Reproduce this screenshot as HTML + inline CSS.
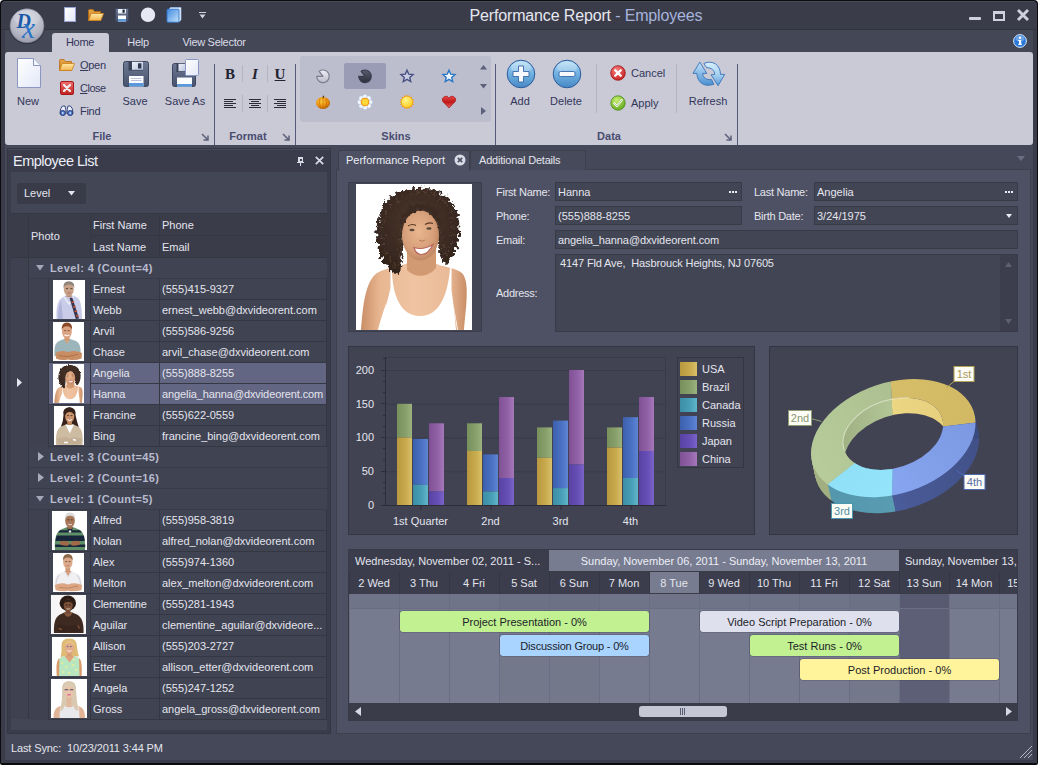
<!DOCTYPE html>
<html><head><meta charset="utf-8"><title>Performance Report - Employees</title>
<style>
html,body{margin:0;padding:0;background:#fff;}
body{width:1038px;height:765px;overflow:hidden;position:relative;font-family:"Liberation Sans",sans-serif;font-size:11px;}
#win{position:absolute;left:0;top:0;width:1038px;height:765px;background:transparent;overflow:hidden;}
#win div,#win span,#win svg{position:absolute;box-sizing:border-box;}
#win span{white-space:nowrap;}
.ph{background:#fff;overflow:hidden;}
</style></head>
<body><div id="win">
<div style="left:0px;top:0px;width:1038px;height:765px;background:#0c0c10;border-radius:4px 4px 2px 2px;"></div>
<div style="left:1px;top:1px;width:1036px;height:762px;background:#3a3c4a;border-radius:4px 4px 0 0;"></div>
<div style="left:4px;top:1px;width:1030px;height:1px;background:#484b5a;"></div>
<span style="left:386px;top:5.5px;width:400px;text-align:center;font-size:16px;line-height:20px;color:#e6e7ef;letter-spacing:-0.15px;">Performance Report<span style="position:static;color:#a7b4dc;"> - Employees</span></span>
<div style="left:969px;top:17px;width:12px;height:3px;background:#cfd1dd;border-radius:1px;"></div>
<div style="left:993px;top:11px;width:12px;height:10px;border:2px solid #cfd1dd;border-top-width:3px;"></div>
<svg style="left:1016px;top:8px;" width="14" height="14" viewBox="0 0 14 14"><path d="M2 2 L12 12 M12 2 L2 12" stroke="#cfd1dd" stroke-width="2.9" fill="none"/></svg>
<div style="left:5px;top:30px;width:1028px;height:23px;background:#444756;"></div>
<div style="left:1px;top:29px;width:1036px;height:1px;background:#32343f;"></div>
<div style="left:52px;top:33px;width:57px;height:20px;background:#c9cad6;border-radius:3px 3px 0 0;"></div>
<span style="left:-20.0px;top:35.0px;width:200px;text-align:center;font-size:11px;line-height:14px;color:#33365a;letter-spacing:-0.3px;">Home</span>
<span style="left:38.0px;top:35.0px;width:200px;text-align:center;font-size:11px;line-height:14px;color:#dcdde8;letter-spacing:-0.3px;">Help</span>
<span style="left:114.0px;top:35.0px;width:200px;text-align:center;font-size:11px;line-height:14px;color:#dcdde8;letter-spacing:-0.3px;">View Selector</span>
<div style="left:5px;top:52px;width:1028px;height:93px;background:#c9cad6;border-radius:3px 3px 3px 3px;"></div>
<div style="left:214px;top:64px;width:1px;height:81px;background:#565979;"></div>
<div style="left:295px;top:64px;width:1px;height:81px;background:#565979;"></div>
<div style="left:495px;top:64px;width:1px;height:81px;background:#565979;"></div>
<div style="left:737px;top:64px;width:1px;height:81px;background:#565979;"></div>
<span style="left:2.0px;top:129.0px;width:200px;text-align:center;font-size:11px;line-height:14px;color:#4a4d70;font-weight:bold;">File</span>
<span style="left:148.0px;top:129.0px;width:200px;text-align:center;font-size:11px;line-height:14px;color:#4a4d70;font-weight:bold;">Format</span>
<span style="left:296.0px;top:129.0px;width:200px;text-align:center;font-size:11px;line-height:14px;color:#4a4d70;font-weight:bold;">Skins</span>
<span style="left:509.0px;top:129.0px;width:200px;text-align:center;font-size:11px;line-height:14px;color:#4a4d70;font-weight:bold;">Data</span>
<span style="left:-72.0px;top:94.0px;width:200px;text-align:center;font-size:11px;line-height:14px;color:#33365a;">New</span>
<span style="left:80px;top:58.0px;font-size:11px;line-height:14px;color:#33365a;letter-spacing:-0.3px;"><u>O</u>pen</span>
<span style="left:80px;top:81.0px;font-size:11px;line-height:14px;color:#33365a;letter-spacing:-0.5px;"><u>C</u>lose</span>
<span style="left:80px;top:104.0px;font-size:11px;line-height:14px;color:#33365a;letter-spacing:-0.3px;">Find</span>
<span style="left:35.0px;top:94.0px;width:200px;text-align:center;font-size:11px;line-height:14px;color:#33365a;">Save</span>
<span style="left:85.0px;top:94.0px;width:200px;text-align:center;font-size:11px;line-height:14px;color:#33365a;">Save As</span>
<span style="left:220.0px;top:67.0px;width:20px;text-align:center;font-size:15px;line-height:14px;color:#22232e;font-family:'Liberation Serif',serif;font-weight:bold;">B</span>
<span style="left:245.0px;top:67.0px;width:20px;text-align:center;font-size:15px;line-height:14px;color:#22232e;font-family:'Liberation Serif',serif;font-weight:bold;font-style:italic;">I</span>
<span style="left:270.0px;top:67.0px;width:20px;text-align:center;font-size:15px;line-height:14px;color:#22232e;font-family:'Liberation Serif',serif;font-weight:bold;"><u>U</u></span>
<div style="left:300px;top:56px;width:191px;height:66px;background:#bcbdcd;border-radius:3px;"></div>
<div style="left:344px;top:63px;width:42px;height:26px;background:#9a9cb6;border-radius:2px;"></div>
<span style="left:420.0px;top:94.0px;width:200px;text-align:center;font-size:11px;line-height:14px;color:#33365a;">Add</span>
<span style="left:466.0px;top:94.0px;width:200px;text-align:center;font-size:11px;line-height:14px;color:#33365a;">Delete</span>
<span style="left:631px;top:66.0px;font-size:11px;line-height:14px;color:#33365a;">Cancel</span>
<span style="left:631px;top:96.0px;font-size:11px;line-height:14px;color:#33365a;">Apply</span>
<span style="left:608.0px;top:94.0px;width:200px;text-align:center;font-size:11px;line-height:14px;color:#33365a;">Refresh</span>
<div style="left:596px;top:64px;width:1px;height:49px;background:#b2b4c6;"></div>
<div style="left:676px;top:64px;width:1px;height:49px;background:#b2b4c6;"></div>
<svg width="0" height="0" style="left:0;top:0;"><defs>
<linearGradient id="igPage" x1="0" y1="0" x2="1" y2="1"><stop offset="0" stop-color="#ffffff"/><stop offset="1" stop-color="#e3e8f8"/></linearGradient>
<linearGradient id="igFolderB" x1="0" y1="0" x2="0" y2="1"><stop offset="0" stop-color="#e8a848"/><stop offset="1" stop-color="#c87818"/></linearGradient>
<linearGradient id="igFolderF" x1="0" y1="0" x2="0" y2="1"><stop offset="0" stop-color="#ffe9a8"/><stop offset="1" stop-color="#f2b450"/></linearGradient>
<linearGradient id="igRed" x1="0" y1="0" x2="0" y2="1"><stop offset="0" stop-color="#f07070"/><stop offset="1" stop-color="#c02020"/></linearGradient>
<linearGradient id="igFloppy" x1="0" y1="0" x2="0" y2="1"><stop offset="0" stop-color="#6d7893"/><stop offset="1" stop-color="#48526c"/></linearGradient>
<linearGradient id="igShut" x1="0" y1="0" x2="1" y2="1"><stop offset="0" stop-color="#eef2fa"/><stop offset="1" stop-color="#b8c4dc"/></linearGradient>
<linearGradient id="igBlueBall" x1="0" y1="0" x2="0" y2="1"><stop offset="0" stop-color="#b4def6"/><stop offset="0.5" stop-color="#6fb0e0"/><stop offset="1" stop-color="#4788c4"/></linearGradient>
<radialGradient id="igRedBall" cx="0.4" cy="0.3" r="0.8"><stop offset="0" stop-color="#f88080"/><stop offset="1" stop-color="#c01818"/></radialGradient>
<radialGradient id="igGreenBall" cx="0.4" cy="0.3" r="0.8"><stop offset="0" stop-color="#c8f070"/><stop offset="1" stop-color="#58a018"/></radialGradient>
<linearGradient id="igArrow" x1="0" y1="0" x2="0" y2="1"><stop offset="0" stop-color="#c4e4fa"/><stop offset="1" stop-color="#4a90d0"/></linearGradient>
<radialGradient id="igApp" cx="0.5" cy="0.3" r="0.8"><stop offset="0" stop-color="#d4d6e0"/><stop offset="0.6" stop-color="#b6b8c6"/><stop offset="1" stop-color="#8e90a2"/></radialGradient>
<linearGradient id="igPacL" x1="0" y1="0" x2="0" y2="1"><stop offset="0" stop-color="#f0f0f6"/><stop offset="1" stop-color="#b8bac8"/></linearGradient>
<linearGradient id="igPacD" x1="0" y1="0" x2="0" y2="1"><stop offset="0" stop-color="#5a5d70"/><stop offset="1" stop-color="#2c2e3a"/></linearGradient>
<radialGradient id="igPump" cx="0.4" cy="0.35" r="0.7"><stop offset="0" stop-color="#ffd040"/><stop offset="0.6" stop-color="#f09010"/><stop offset="1" stop-color="#a85800"/></radialGradient>
<radialGradient id="igSun" cx="0.4" cy="0.35" r="0.7"><stop offset="0" stop-color="#fff890"/><stop offset="1" stop-color="#ffc818"/></radialGradient>
<linearGradient id="igHeart" x1="0" y1="0" x2="0" y2="1"><stop offset="0" stop-color="#e84848"/><stop offset="0.5" stop-color="#c01818"/><stop offset="1" stop-color="#e06060"/></linearGradient>
<linearGradient id="igArrow2" x1="0" y1="0" x2="0" y2="1"><stop offset="0" stop-color="#d8f0fc"/><stop offset="0.55" stop-color="#a4d0f0"/><stop offset="1" stop-color="#5a9ad8"/></linearGradient>
<linearGradient id="igCube" x1="0" y1="0" x2="1" y2="1"><stop offset="0" stop-color="#3f8ae0"/><stop offset="1" stop-color="#c4e2fa"/></linearGradient>
</defs></svg>
<svg style="left:17px;top:58px;" width="24" height="30" viewBox="0 0 24 30"><path d="M0.5 0.5H16.5L23.5 7.5V29.5H0.5Z" fill="url(#igPage)" stroke="#8b97c2"/><path d="M16.5 0.5V7.5H23.5" fill="#f4f6fd" stroke="#8b97c2"/></svg>
<svg style="left:59px;top:59px;" width="16" height="12" viewBox="0 0 16 12"><path d="M0.5 11.5V1.5Q0.5 0.5 1.5 0.5H5L6.5 2.5H12.5V11.5Z" fill="url(#igFolderB)" stroke="#b86c10" stroke-width="0.8"/><path d="M0.6 11.5L3.2 4.5H15.6L12.8 11.5Z" fill="url(#igFolderF)" stroke="#c8801c" stroke-width="0.8"/></svg>
<svg style="left:60px;top:81px;" width="14" height="14" viewBox="0 0 14 14"><rect x="0.5" y="0.5" width="13" height="13" rx="1.5" fill="url(#igRed)" stroke="#a81818"/><path d="M4 4L10 10M10 4L4 10" stroke="#f4ecec" stroke-width="2.3" stroke-linecap="round"/></svg>
<svg style="left:59px;top:105px;" width="15" height="11" viewBox="0 0 15 11"><path d="M1 8.5Q1 3 3.5 1H6Q7 4 7 8.5Z M14 8.5Q14 3 11.5 1H9Q8 4 8 8.5Z" fill="#e8eefa" stroke="#3c4a80" stroke-width="1"/><circle cx="3.8" cy="8" r="2.6" fill="#4a7ad0" stroke="#2c3870" stroke-width="0.9"/><circle cx="11.2" cy="8" r="2.6" fill="#4a7ad0" stroke="#2c3870" stroke-width="0.9"/><circle cx="3.8" cy="8" r="0.9" fill="#cfe0ff"/><circle cx="11.2" cy="8" r="0.9" fill="#cfe0ff"/></svg>
<svg style="left:123px;top:61px;" width="26" height="26" viewBox="0 0 26 26"><rect x="0.5" y="0.5" width="25" height="25" rx="2" fill="url(#igFloppy)" stroke="#3e4760"/><rect x="5.5" y="0.5" width="14.5" height="9" fill="#3a4258"/><rect x="9" y="0.8" width="11" height="8" fill="url(#igShut)"/><rect x="15" y="2.3" width="3.4" height="5.2" fill="#2e3650"/><rect x="6" y="15" width="14.5" height="10.5" fill="#fbfcff"/><rect x="6" y="22" width="14.5" height="3.5" fill="#5a9adc"/><path d="M8 17.5H18.5M8 19.5H18.5" stroke="#a8b4d0" stroke-width="0.8"/></svg>
<svg style="left:172px;top:63px;" width="24" height="24" viewBox="0 0 24 24"><rect x="0.5" y="0.5" width="23" height="23" rx="2" fill="url(#igFloppy)" stroke="#3e4760"/><rect x="4.5" y="0.5" width="9" height="8.5" fill="#3a4258"/><rect x="6.5" y="0.8" width="7" height="7.4" fill="url(#igShut)"/><rect x="5" y="14.5" width="15" height="9" fill="#fbfcff"/><rect x="5" y="21" width="15" height="2.6" fill="#5a9adc"/></svg>
<svg style="left:185px;top:59px;" width="14" height="17" viewBox="0 0 14 17"><rect x="0.5" y="0.5" width="13" height="16" rx="1" fill="url(#igPage)" stroke="#8b97c2"/></svg>
<div style="left:242px;top:65px;width:1px;height:17px;background:#b2b4c6;"></div>
<div style="left:242px;top:95px;width:1px;height:17px;background:#b2b4c6;"></div>
<div style="left:267px;top:65px;width:1px;height:17px;background:#b2b4c6;"></div>
<div style="left:267px;top:95px;width:1px;height:17px;background:#b2b4c6;"></div>
<div style="left:224px;top:99px;width:12px;height:1px;background:#2a2b36;"></div>
<div style="left:224px;top:101px;width:9px;height:1px;background:#2a2b36;"></div>
<div style="left:224px;top:103px;width:12px;height:1px;background:#2a2b36;"></div>
<div style="left:224px;top:105px;width:9px;height:1px;background:#2a2b36;"></div>
<div style="left:224px;top:107px;width:12px;height:1px;background:#2a2b36;"></div>
<div style="left:249px;top:99px;width:12px;height:1px;background:#2a2b36;"></div>
<div style="left:251px;top:101px;width:8px;height:1px;background:#2a2b36;"></div>
<div style="left:249px;top:103px;width:12px;height:1px;background:#2a2b36;"></div>
<div style="left:251px;top:105px;width:8px;height:1px;background:#2a2b36;"></div>
<div style="left:249px;top:107px;width:12px;height:1px;background:#2a2b36;"></div>
<div style="left:274px;top:99px;width:12px;height:1px;background:#2a2b36;"></div>
<div style="left:277px;top:101px;width:9px;height:1px;background:#2a2b36;"></div>
<div style="left:274px;top:103px;width:12px;height:1px;background:#2a2b36;"></div>
<div style="left:277px;top:105px;width:9px;height:1px;background:#2a2b36;"></div>
<div style="left:274px;top:107px;width:12px;height:1px;background:#2a2b36;"></div>
<svg style="left:315px;top:68px;" width="16" height="16" viewBox="0 0 16 16"><path d="M8 8.3L1.7 8.3A6.3 6.3 0 1 0 4.2 3.3Z" fill="url(#igPacL)" stroke="#7c7e90" stroke-width="1.2" stroke-linejoin="round"/></svg>
<svg style="left:357px;top:68px;" width="16" height="16" viewBox="0 0 16 16"><path d="M8 8.3L1.7 8.3A6.3 6.3 0 1 0 4.2 3.3Z" fill="url(#igPacD)" stroke="#3a3c4c" stroke-width="1.2" stroke-linejoin="round"/></svg>
<svg style="left:399px;top:68px;" width="16" height="16" viewBox="0 0 16 16"><polygon points="8.00,2.20 9.70,6.15 13.99,6.55 10.76,9.40 11.70,13.60 8.00,11.40 4.30,13.60 5.24,9.40 2.01,6.55 6.30,6.15" fill="#c9cde2" stroke="#4a5284" stroke-width="1.4" stroke-linejoin="miter"/></svg>
<svg style="left:441px;top:68px;" width="16" height="16" viewBox="0 0 16 16"><polygon points="8.00,2.20 9.70,6.15 13.99,6.55 10.76,9.40 11.70,13.60 8.00,11.40 4.30,13.60 5.24,9.40 2.01,6.55 6.30,6.15" fill="#f2f6fc" stroke="#2a78c6" stroke-width="1.4" stroke-linejoin="miter"/></svg>
<svg style="left:315px;top:94px;" width="16" height="16" viewBox="0 0 16 16"><ellipse cx="8" cy="9" rx="7" ry="6" fill="url(#igPump)"/><path d="M5 4.5Q4 9 5.5 14.5M8 3.8V15M11 4.5Q12 9 10.5 14.5" stroke="#b86800" stroke-width="0.7" fill="none"/><path d="M7.5 3.8L8 1.5L9.2 2L8.8 4Z" fill="#5a3a10"/></svg>
<svg style="left:357px;top:94px;" width="16" height="16" viewBox="0 0 16 16"><circle cx="13.20" cy="8.00" r="2.5" fill="#f2f8ff" stroke="#a8b8d0" stroke-width="0.5"/><circle cx="11.68" cy="11.68" r="2.5" fill="#f2f8ff" stroke="#a8b8d0" stroke-width="0.5"/><circle cx="8.00" cy="13.20" r="2.5" fill="#f2f8ff" stroke="#a8b8d0" stroke-width="0.5"/><circle cx="4.32" cy="11.68" r="2.5" fill="#f2f8ff" stroke="#a8b8d0" stroke-width="0.5"/><circle cx="2.80" cy="8.00" r="2.5" fill="#f2f8ff" stroke="#a8b8d0" stroke-width="0.5"/><circle cx="4.32" cy="4.32" r="2.5" fill="#f2f8ff" stroke="#a8b8d0" stroke-width="0.5"/><circle cx="8.00" cy="2.80" r="2.5" fill="#f2f8ff" stroke="#a8b8d0" stroke-width="0.5"/><circle cx="11.68" cy="4.32" r="2.5" fill="#f2f8ff" stroke="#a8b8d0" stroke-width="0.5"/><circle cx="8" cy="8" r="3.9" fill="#ffd838" stroke="#f09018" stroke-width="1"/></svg>
<svg style="left:399px;top:94px;" width="16" height="16" viewBox="0 0 16 16"><path d="M15.60 8.00L13.39 6.91L13.39 9.09Z" fill="#f09a18"/><path d="M15.02 10.91L13.40 9.05L12.56 11.07Z" fill="#f09a18"/><path d="M13.37 13.37L12.58 11.04L11.04 12.58Z" fill="#f09a18"/><path d="M10.91 15.02L11.07 12.56L9.05 13.40Z" fill="#f09a18"/><path d="M8.00 15.60L9.09 13.39L6.91 13.39Z" fill="#f09a18"/><path d="M5.09 15.02L6.95 13.40L4.93 12.56Z" fill="#f09a18"/><path d="M2.63 13.37L4.96 12.58L3.42 11.04Z" fill="#f09a18"/><path d="M0.98 10.91L3.44 11.07L2.60 9.05Z" fill="#f09a18"/><path d="M0.40 8.00L2.61 9.09L2.61 6.91Z" fill="#f09a18"/><path d="M0.98 5.09L2.60 6.95L3.44 4.93Z" fill="#f09a18"/><path d="M2.63 2.63L3.42 4.96L4.96 3.42Z" fill="#f09a18"/><path d="M5.09 0.98L4.93 3.44L6.95 2.60Z" fill="#f09a18"/><path d="M8.00 0.40L6.91 2.61L9.09 2.61Z" fill="#f09a18"/><path d="M10.91 0.98L9.05 2.60L11.07 3.44Z" fill="#f09a18"/><path d="M13.37 2.63L11.04 3.42L12.58 4.96Z" fill="#f09a18"/><path d="M15.02 5.09L12.56 4.93L13.40 6.95Z" fill="#f09a18"/><circle cx="8" cy="8" r="5.8" fill="url(#igSun)" stroke="#f0a018" stroke-width="0.6"/></svg>
<svg style="left:441px;top:94px;" width="16" height="16" viewBox="0 0 16 16"><path d="M8 14L1.8 7.5A3.4 3.4 0 0 1 8 4A3.4 3.4 0 0 1 14.2 7.5Z" fill="url(#igHeart)" stroke="#a01010" stroke-width="0.6"/></svg>
<svg style="left:480px;top:65px;" width="7" height="5" viewBox="0 0 7 5"><path d="M0 4.5H7L3.5 0Z" fill="#5d607a"/></svg>
<svg style="left:480px;top:84px;" width="7" height="5" viewBox="0 0 7 5"><path d="M0 0H7L3.5 4.5Z" fill="#5d607a"/></svg>
<svg style="left:481px;top:107px;" width="5" height="8" viewBox="0 0 5 8"><path d="M0 0V8L5 4Z" fill="#5d607a"/></svg>
<svg style="left:506px;top:59px;" width="30" height="30" viewBox="0 0 30 30"><circle cx="15" cy="15" r="13.8" fill="url(#igBlueBall)" stroke="#2c5a9c" stroke-width="1"/><ellipse cx="15" cy="8.5" rx="10" ry="6" fill="rgba(255,255,255,0.25)"/><path d="M12.5 7H17.5V12.5H23V17.5H17.5V23H12.5V17.5H7V12.5H12.5Z" fill="#f6f8fe" stroke="#3568a8" stroke-width="0.9" stroke-linejoin="round"/></svg>
<svg style="left:552px;top:59px;" width="30" height="30" viewBox="0 0 30 30"><circle cx="15" cy="15" r="13.8" fill="url(#igBlueBall)" stroke="#2c5a9c" stroke-width="1"/><ellipse cx="15" cy="8.5" rx="10" ry="6" fill="rgba(255,255,255,0.25)"/><rect x="7" y="12.5" width="16" height="5" rx="1.5" fill="#f6f8fe" stroke="#3568a8" stroke-width="0.9"/></svg>
<svg style="left:610px;top:65px;" width="16" height="16" viewBox="0 0 16 16"><circle cx="8" cy="8" r="7.3" fill="url(#igRedBall)" stroke="#a01414" stroke-width="0.8"/><path d="M5.2 5.2L10.8 10.8M10.8 5.2L5.2 10.8" stroke="#fff" stroke-width="2.3" stroke-linecap="round"/></svg>
<svg style="left:610px;top:95px;" width="16" height="16" viewBox="0 0 16 16"><circle cx="8" cy="8" r="7.2" fill="url(#igGreenBall)" stroke="#4a8a14" stroke-width="0.8"/><path d="M4.3 8.2L7 11L11.8 4.8" stroke="#fff" stroke-width="2" fill="none" stroke-linecap="round" stroke-linejoin="round"/><path d="M4.3 8.2L7 11L11.8 4.8" stroke="#3a7010" stroke-width="0.4" fill="none"/></svg>
<svg style="left:688px;top:56px;" width="42" height="36" viewBox="0 0 42 36"><path d="M11.8 6.1L18.8 17.4L14.6 17.4C14.8 21.5 18.5 24.3 23.5 23.5L25.9 28.2C17 31.5 9.2 27 8.9 17.4L4.9 17.4Z" fill="url(#igArrow)" stroke="#3a72b8" stroke-width="0.9" stroke-linejoin="round"/><path d="M30.1 29.7L23.1 18.8L26.8 18.4C26.5 14.5 23.5 11.5 18.8 11.8L15.8 7.5C24.5 3.5 32.5 9 32.5 18.4L36.7 18.4Z" fill="url(#igArrow2)" stroke="#3a72b8" stroke-width="0.9" stroke-linejoin="round"/></svg>
<svg style="left:201px;top:133px;" width="8" height="8" viewBox="0 0 8 8"><path d="M1 1L6.5 6.5M2.5 7H7V2.5" stroke="#5d607a" stroke-width="1.5" fill="none"/></svg>
<svg style="left:282px;top:133px;" width="8" height="8" viewBox="0 0 8 8"><path d="M1 1L6.5 6.5M2.5 7H7V2.5" stroke="#5d607a" stroke-width="1.5" fill="none"/></svg>
<svg style="left:724px;top:133px;" width="8" height="8" viewBox="0 0 8 8"><path d="M1 1L6.5 6.5M2.5 7H7V2.5" stroke="#5d607a" stroke-width="1.5" fill="none"/></svg>
<svg style="left:64px;top:7px;" width="12" height="15" viewBox="0 0 12 15"><rect x="0.5" y="0.5" width="11" height="14" fill="url(#igPage)" stroke="#98a3d0"/></svg>
<svg style="left:88px;top:9px;" width="16" height="12" viewBox="0 0 16 12"><path d="M0.5 11.5V1.5Q0.5 0.5 1.5 0.5H5L6.5 2.5H12.5V11.5Z" fill="url(#igFolderB)" stroke="#b86c10" stroke-width="0.8"/><path d="M0.6 11.5L3.2 4.5H15.6L12.8 11.5Z" fill="url(#igFolderF)" stroke="#c8801c" stroke-width="0.8"/></svg>
<svg style="left:115px;top:8px;" width="14" height="14" viewBox="0 0 14 14"><rect x="0.5" y="0.5" width="13" height="13" rx="1" fill="url(#igFloppy)" stroke="#3e4760"/><rect x="3" y="1" width="8" height="4.5" fill="#eef2fa"/><rect x="7.5" y="1.6" width="2.2" height="3.2" fill="#1e2436"/><rect x="3" y="7.5" width="8" height="6" fill="#fbfcff"/><rect x="3" y="11" width="8" height="2.5" fill="#5a9adc"/></svg>
<svg style="left:140px;top:7px;" width="16" height="16" viewBox="0 0 16 16"><circle cx="8" cy="7.8" r="7.2" fill="#e6e8f3"/></svg>
<svg style="left:166px;top:7px;" width="16" height="16" viewBox="0 0 16 16"><path d="M2.5 2.5L4.5 0.5H15V13L13 15Z" fill="#eaf2fc" stroke="#9cc0e8" stroke-width="0.7"/><rect x="1" y="2.2" width="12" height="13" rx="0.8" fill="url(#igCube)" stroke="#2f72c8" stroke-width="0.9"/></svg>
<div style="left:199px;top:12px;width:7px;height:1px;background:#cfd1dd;"></div>
<svg style="left:199px;top:14px;" width="7" height="5" viewBox="0 0 7 5"><path d="M0.5 0.5H6.5L3.5 4.5Z" fill="#cfd1dd"/></svg>
<svg style="left:8px;top:7px;" width="38" height="38" viewBox="0 0 38 38"><circle cx="19" cy="19" r="18" fill="#2c2e3a"/><circle cx="19" cy="18.7" r="17" fill="url(#igApp)" stroke="#7c7e90" stroke-width="0.8"/><ellipse cx="19" cy="11" rx="13" ry="8" fill="rgba(255,255,255,0.18)"/><text x="8.5" y="21" font-family="Liberation Serif, serif" font-style="italic" font-weight="bold" font-size="20" fill="#1c58a8">D</text><text x="14" y="30.5" font-family="Liberation Serif, serif" font-style="italic" font-size="29" fill="#2a74c8">x</text></svg>
<svg style="left:1013px;top:34px;" width="14" height="14" viewBox="0 0 14 14"><circle cx="7" cy="7" r="6.4" fill="#2a78d8" stroke="#d8e8fc" stroke-width="1"/><ellipse cx="7" cy="4.5" rx="4.5" ry="2.8" fill="rgba(255,255,255,0.3)"/><rect x="6" y="6" width="2.2" height="4.6" fill="#fff"/><rect x="5.2" y="6" width="1.6" height="1" fill="#fff"/><rect x="5.2" y="9.8" width="3.8" height="1" fill="#fff"/><circle cx="7" cy="3.8" r="1.2" fill="#fff"/></svg>
<div style="left:5px;top:145px;width:1028px;height:616px;background:#454858;"></div>
<div style="left:7px;top:148px;width:324px;height:586px;background:#3a3c4b;border:1px solid #343642;"></div>
<div style="left:8px;top:149px;width:322px;height:1px;background:#474a5a;"></div>
<span style="left:13px;top:152.0px;font-size:14.5px;line-height:18px;color:#eceef6;letter-spacing:-0.5px;">Employee List</span>
<div style="left:298px;top:157px;width:5px;height:5px;background:#d9dbe6;"></div>
<div style="left:300px;top:159px;width:2px;height:2px;background:#3a3c4b;"></div>
<div style="left:297px;top:162px;width:7px;height:1px;background:#d9dbe6;"></div>
<div style="left:300px;top:163px;width:1px;height:3px;background:#d9dbe6;"></div>
<svg style="left:315px;top:156px;" width="9" height="9" viewBox="0 0 9 9"><path d="M0.8 0.8L8.2 8.2M8.2 0.8L0.8 8.2" stroke="#d9dbe6" stroke-width="1.7" fill="none"/></svg>
<div style="left:11px;top:172px;width:316px;height:558px;background:#434655;"></div>
<div style="left:17px;top:183px;width:69px;height:21px;background:#393b49;border-radius:2px;"></div>
<span style="left:24px;top:186.0px;font-size:11px;line-height:14px;color:#e4e5ee;">Level</span>
<svg style="left:68px;top:191px;" width="7" height="5" viewBox="0 0 7 5"><path d="M0 0h7l-3.5 4.5z" fill="#e4e5ee"/></svg>
<div style="left:11px;top:213px;width:316px;height:45px;background:#3a3c4a;border-top:1px solid #353742;border-bottom:1px solid #353742;"></div>
<div style="left:28px;top:213px;width:1px;height:45px;background:#353742;"></div>
<div style="left:90px;top:213px;width:1px;height:45px;background:#353742;"></div>
<div style="left:159px;top:213px;width:1px;height:45px;background:#353742;"></div>
<div style="left:90px;top:235px;width:237px;height:1px;background:#353742;"></div>
<span style="left:31px;top:229.0px;font-size:11px;line-height:14px;color:#e4e5ee;">Photo</span>
<span style="left:93px;top:218.0px;font-size:11px;line-height:14px;color:#e4e5ee;">First Name</span>
<span style="left:93px;top:240.0px;font-size:11px;line-height:14px;color:#e4e5ee;">Last Name</span>
<span style="left:162px;top:218.0px;font-size:11px;line-height:14px;color:#e4e5ee;">Phone</span>
<span style="left:162px;top:240.0px;font-size:11px;line-height:14px;color:#e4e5ee;">Email</span>
<div style="left:11px;top:258px;width:17px;height:461px;background:#3f4150;"></div>
<div style="left:28px;top:258px;width:1px;height:461px;background:#353742;"></div>
<svg style="left:17px;top:378px;" width="5" height="9" viewBox="0 0 5 9"><path d="M0 0l5 4.5l-5 4.5z" fill="#e4e5ee"/></svg>
<div style="left:29px;top:258px;width:298px;height:21px;background:#404352;border-bottom:1px solid #393b48;"></div>
<svg style="left:36px;top:265px;" width="8" height="6" viewBox="0 0 8 6"><path d="M0 0h8l-4 5.5z" fill="#a3a5b8"/></svg>
<span style="left:50px;top:261.0px;font-size:11px;line-height:14px;color:#b9bbce;font-weight:bold;letter-spacing:0.4px;">Level: 4 (Count=4)</span>
<div style="left:29px;top:279px;width:19px;height:42px;background:#3f4150;"></div>
<div style="left:48px;top:279px;width:279px;height:42px;background:#404352;"></div>
<div style="left:48px;top:320px;width:279px;height:1px;background:#353742;"></div>
<div style="left:90px;top:299px;width:237px;height:1px;background:#353742;"></div>
<div style="left:48px;top:279px;width:1px;height:42px;background:#353742;"></div>
<div style="left:90px;top:279px;width:1px;height:42px;background:#353742;"></div>
<div style="left:159px;top:279px;width:1px;height:42px;background:#353742;"></div>
<div style="left:326px;top:279px;width:1px;height:42px;background:#353742;"></div>
<div class="ph" style="left:53px;top:280px;width:32px;height:39px;"><svg width="32" height="39" viewBox="0 0 32 39" style="left:0;top:0;"><rect width="32" height="39" fill="#fff"/><g style="filter:blur(0.45px)"><path d="M3.5 39C3 30 4 22 8 18.5L12.5 15.5L20 15.5L25 18C28 21 29 30 29 39Z" fill="#c9cce8"/><path d="M5 39C5 30 6 25 8 21L10 39Z" fill="#aeb2d6"/><path d="M11 17L16 24L20.5 16.5" fill="none" stroke="#e8eaf8" stroke-width="1.6"/><path d="M16.5 18L19.3 17.5L26 38.5L22.8 39Z" fill="#35354f"/><path d="M18.5 22.5L21 22M20 27L22.6 26.5M21.6 31.5L24.2 31M23 36L25.6 35.5" stroke="#c8543c" stroke-width="1.3"/><rect x="13.5" y="12" width="5" height="5" fill="#b98a70"/><ellipse cx="15.8" cy="9.2" rx="5" ry="6.8" fill="#c9a088"/><path d="M10.4 8.5Q9.8 1.2 15.8 1.2Q22 1.2 21.3 8.5Q20.5 4.8 15.8 4.6Q11.5 4.8 10.4 8.5Z" fill="#8d857b"/><path d="M13 8.6h2M17.4 8.6h2" stroke="#4a3a30" stroke-width="0.9"/><path d="M14.6 13h3" stroke="#8a5a48" stroke-width="0.7"/></g></svg></div>
<span style="left:93px;top:282.0px;font-size:11px;line-height:14px;color:#e4e5ee;">Ernest</span>
<span style="left:93px;top:303.0px;font-size:11px;line-height:14px;color:#e4e5ee;">Webb</span>
<span style="left:162px;top:282.0px;font-size:11px;line-height:14px;color:#e4e5ee;">(555)415-9327</span>
<span style="left:162px;top:303.0px;font-size:11px;line-height:14px;color:#e4e5ee;">ernest_webb@dxvideorent.com</span>
<div style="left:29px;top:321px;width:19px;height:42px;background:#3f4150;"></div>
<div style="left:48px;top:321px;width:279px;height:42px;background:#404352;"></div>
<div style="left:48px;top:362px;width:279px;height:1px;background:#353742;"></div>
<div style="left:90px;top:341px;width:237px;height:1px;background:#353742;"></div>
<div style="left:48px;top:321px;width:1px;height:42px;background:#353742;"></div>
<div style="left:90px;top:321px;width:1px;height:42px;background:#353742;"></div>
<div style="left:159px;top:321px;width:1px;height:42px;background:#353742;"></div>
<div style="left:326px;top:321px;width:1px;height:42px;background:#353742;"></div>
<div class="ph" style="left:53px;top:322px;width:31px;height:39px;"><svg width="31" height="39" viewBox="0 0 31 39" style="left:0;top:0;"><rect width="31" height="39" fill="#fff"/><g style="filter:blur(0.45px)"><path d="M1.5 34C1 26 2 21 6 19L11 17L17 17L23 19C27 21 28 26 27.5 34Z" fill="#9bb5bb"/><path d="M11 17L14 22L17 17Z" fill="#d9a07c"/><path d="M2.5 31Q8 27.5 15 30Q22 27.5 29 31L28.5 36.5Q22 39 15 37.5Q8 39 3 36.5Z" fill="#c98d64"/><path d="M6 33.5Q15 36 25 32" stroke="#a8683f" stroke-width="0.8" fill="none"/><rect x="11.5" y="13" width="5" height="5" fill="#cf9670"/><ellipse cx="13.9" cy="9.5" rx="4.9" ry="7" fill="#dba382"/><path d="M8.8 8Q8.4 0.6 13.9 0.6Q19.6 0.6 19 8Q18 4.2 13.9 4.2Q9.8 4.2 8.8 8Z" fill="#8a4a28"/><path d="M11.5 12.8Q14 14.8 16.4 12.8" stroke="#fff" stroke-width="1.1" fill="none"/><path d="M11.3 8.6h1.8M14.8 8.6h1.8" stroke="#5a3a28" stroke-width="0.8"/></g></svg></div>
<span style="left:93px;top:324.0px;font-size:11px;line-height:14px;color:#e4e5ee;">Arvil</span>
<span style="left:93px;top:345.0px;font-size:11px;line-height:14px;color:#e4e5ee;">Chase</span>
<span style="left:162px;top:324.0px;font-size:11px;line-height:14px;color:#e4e5ee;">(555)586-9256</span>
<span style="left:162px;top:345.0px;font-size:11px;line-height:14px;color:#e4e5ee;">arvil_chase@dxvideorent.com</span>
<div style="left:29px;top:363px;width:19px;height:42px;background:#3f4150;"></div>
<div style="left:48px;top:363px;width:279px;height:42px;background:#636683;"></div>
<div style="left:48px;top:404px;width:279px;height:1px;background:#353742;"></div>
<div style="left:90px;top:383px;width:237px;height:1px;background:#353742;"></div>
<div style="left:48px;top:363px;width:1px;height:42px;background:#353742;"></div>
<div style="left:90px;top:363px;width:1px;height:42px;background:#353742;"></div>
<div style="left:159px;top:363px;width:1px;height:42px;background:#353742;"></div>
<div style="left:326px;top:363px;width:1px;height:42px;background:#353742;"></div>
<div class="ph" style="left:53px;top:364px;width:31px;height:39px;"><svg width="31" height="39" viewBox="0 0 116 146" preserveAspectRatio="none" style="left:0;top:0;"><rect width="116" height="146" fill="#fff"/><g filter="url(#soft)"><path d="M5 146 C7 122 9 98 21 89 C31 83 44 83 52 79 L78 79 C86 83 98 83 106 89 C114 98 110 122 108 146 Z" fill="url(#skinB)"/><path d="M51 62 L51 86 C58 94 72 94 80 84 L80 62 Z" fill="#d29a72"/><path d="M24 146 C28 128 32 116 34.5 104 L34.5 84 L36 84 C36 110 44 132 64 132 C84 132 92 110 94 84 L95.5 84 L95.5 106 C97 118 99 130 100 146 Z" fill="#fff"/><path d="M22 146 C25 134 28 126 30.5 118 L28 146 Z M102 146 C100 134 98.5 126 97 118 L101 146 Z" fill="#fff"/></g><g filter="url(#curl)"><path d="M62 4 C84 2 100 16 103 38 C105 56 99 72 91 80 C85 80 82 62 80 50 L48 50 C47 62 47 80 43 91 C34 89 25 78 22 64 C17 44 23 21 37 11 C45 6 54 4 62 4 Z" fill="url(#hairG)"/></g><g filter="url(#curl2)" opacity="0.55"><path d="M60 8 C80 6 95 20 97 40 C98 52 95 64 90 72 C86 60 84 44 78 36 C70 28 56 28 50 36 C44 46 46 70 42 84 C34 78 28 66 27 54 C25 34 34 14 60 8 Z" fill="none" stroke="#6a5040" stroke-width="2.2" stroke-dasharray="3 5"/></g><g filter="url(#soft)"><ellipse cx="64.5" cy="51.5" rx="18.5" ry="25" fill="url(#skinF)"/></g><g filter="url(#curl)"><path d="M44 46 C43 28 54 20 66 20 C78 20 87 30 85 48 C82 36 76 26 66 25.5 C54 26 48 36 44 46 Z" fill="#3b2a22"/></g><g filter="url(#soft)"><path d="M52 42 q4 -2.6 8 -0.5 M69 40.5 q4 -2.6 8 -1" stroke="#5a3a28" stroke-width="1.1" fill="none"/><ellipse cx="56" cy="46" rx="2.6" ry="1.2" fill="#5a4a3a"/><ellipse cx="73" cy="44.5" rx="2.6" ry="1.2" fill="#5a4a3a"/><path d="M63 56 q3 2.5 6 0" stroke="#b07454" stroke-width="0.9" fill="none"/><path d="M58 63.5 Q67 66.5 77 60.5 Q72 71 64.5 70.5 Q59.5 69.5 58 63.5 Z" fill="#fff" stroke="#b8645c" stroke-width="1.1"/></g></svg></div>
<span style="left:93px;top:366.0px;font-size:11px;line-height:14px;color:#e4e5ee;">Angelia</span>
<span style="left:93px;top:387.0px;font-size:11px;line-height:14px;color:#e4e5ee;">Hanna</span>
<span style="left:162px;top:366.0px;font-size:11px;line-height:14px;color:#e4e5ee;">(555)888-8255</span>
<span style="left:162px;top:387.0px;font-size:11px;line-height:14px;color:#e4e5ee;"><span style="position:static;letter-spacing:-0.1px">angelia_hanna@dxvideorent.com</span></span>
<div style="left:29px;top:405px;width:19px;height:42px;background:#3f4150;"></div>
<div style="left:48px;top:405px;width:279px;height:42px;background:#404352;"></div>
<div style="left:48px;top:446px;width:279px;height:1px;background:#353742;"></div>
<div style="left:90px;top:425px;width:237px;height:1px;background:#353742;"></div>
<div style="left:48px;top:405px;width:1px;height:42px;background:#353742;"></div>
<div style="left:90px;top:405px;width:1px;height:42px;background:#353742;"></div>
<div style="left:159px;top:405px;width:1px;height:42px;background:#353742;"></div>
<div style="left:326px;top:405px;width:1px;height:42px;background:#353742;"></div>
<div class="ph" style="left:54px;top:406px;width:30px;height:39px;"><svg width="30" height="39" viewBox="0 0 30 39" style="left:0;top:0;"><rect width="30" height="39" fill="#fff"/><g style="filter:blur(0.45px)"><path d="M9.5 9Q8 2 15.5 1Q22.5 2 21.5 9Q23 16 25 22L19 20L12 20L6.5 22Q9.5 15 9.5 9Z" fill="#36221a"/><path d="M2 39C1.5 30 2.5 23 7 20.5L12 18.5L19.5 18.5L24 20.5C28.5 23 29 30 28.5 39Z" fill="#cdbba2"/><path d="M11.5 18.5L15.8 27.5L20 18.5Z" fill="#fbfbfd"/><path d="M3 33Q9 30 15.5 32.5Q22 30 28 33L27.5 37.5Q21 39.5 15.5 38Q9 39.5 3.5 37.5Z" fill="#c2ae94"/><path d="M10 36.5h4M19 33.5l3 0.8" stroke="#fbfbfd" stroke-width="1.6"/><rect x="13.3" y="14" width="4.6" height="5" fill="#bd8560"/><ellipse cx="15.7" cy="10" rx="4.6" ry="6.6" fill="#cb946e"/><path d="M11 9.5Q10.5 3 15.7 3Q21 3 20.5 9.5Q19 5.8 15.7 6Q12.5 5.8 11 9.5Z" fill="#36221a"/><path d="M13.6 13.6Q15.7 15.4 17.8 13.6" stroke="#fff" stroke-width="1" fill="none"/><path d="M13 9.6h1.8M16.6 9.6h1.8" stroke="#3a2418" stroke-width="0.8"/></g></svg></div>
<span style="left:93px;top:408.0px;font-size:11px;line-height:14px;color:#e4e5ee;">Francine</span>
<span style="left:93px;top:429.0px;font-size:11px;line-height:14px;color:#e4e5ee;">Bing</span>
<span style="left:162px;top:408.0px;font-size:11px;line-height:14px;color:#e4e5ee;">(555)622-0559</span>
<span style="left:162px;top:429.0px;font-size:11px;line-height:14px;color:#e4e5ee;">francine_bing@dxvideorent.com</span>
<div style="left:29px;top:447px;width:298px;height:21px;background:#404352;border-bottom:1px solid #393b48;"></div>
<svg style="left:38px;top:452px;" width="6" height="9" viewBox="0 0 6 9"><path d="M0 0l6 4.5l-6 4.5z" fill="#a9abbd"/></svg>
<span style="left:50px;top:450.0px;font-size:11px;line-height:14px;color:#b9bbce;font-weight:bold;letter-spacing:0.4px;">Level: 3 (Count=45)</span>
<div style="left:29px;top:468px;width:298px;height:21px;background:#404352;border-bottom:1px solid #393b48;"></div>
<svg style="left:38px;top:473px;" width="6" height="9" viewBox="0 0 6 9"><path d="M0 0l6 4.5l-6 4.5z" fill="#a9abbd"/></svg>
<span style="left:50px;top:471.0px;font-size:11px;line-height:14px;color:#b9bbce;font-weight:bold;letter-spacing:0.4px;">Level: 2 (Count=16)</span>
<div style="left:29px;top:489px;width:298px;height:21px;background:#404352;border-bottom:1px solid #393b48;"></div>
<svg style="left:36px;top:496px;" width="8" height="6" viewBox="0 0 8 6"><path d="M0 0h8l-4 5.5z" fill="#a3a5b8"/></svg>
<span style="left:50px;top:492.0px;font-size:11px;line-height:14px;color:#b9bbce;font-weight:bold;letter-spacing:0.4px;">Level: 1 (Count=5)</span>
<div style="left:29px;top:510px;width:19px;height:42px;background:#3f4150;"></div>
<div style="left:48px;top:510px;width:279px;height:42px;background:#404352;"></div>
<div style="left:48px;top:551px;width:279px;height:1px;background:#353742;"></div>
<div style="left:90px;top:530px;width:237px;height:1px;background:#353742;"></div>
<div style="left:48px;top:510px;width:1px;height:42px;background:#353742;"></div>
<div style="left:90px;top:510px;width:1px;height:42px;background:#353742;"></div>
<div style="left:159px;top:510px;width:1px;height:42px;background:#353742;"></div>
<div style="left:326px;top:510px;width:1px;height:42px;background:#353742;"></div>
<div class="ph" style="left:52px;top:511px;width:35px;height:39px;"><svg width="35" height="39" viewBox="0 0 35 39" style="left:0;top:0;"><rect width="35" height="39" fill="#fff"/><g style="filter:blur(0.45px)"><path d="M3 39C2 29 4 21 9 18.5L14 16.5L22 16.5L27 18.5C32 21 33.5 29 33 39Z" fill="#5f8f66"/><path d="M4.5 24.5L32 24.5L32.8 30L3.5 30Z" fill="#18263c"/><path d="M8 19.2L28 19.2L30 21.5L6 21.5Z" fill="#18263c"/><path d="M3.2 33.5h30v2.6h-30z" fill="#18263c"/><path d="M14.5 16.5L18 22L21.5 16.5Z" fill="#1c2a40"/><circle cx="18" cy="20.5" r="1.2" fill="#e8e8e8"/><path d="M8 30.5Q13 28.5 17.5 31.5L16.5 34.5Q11 35 8 33.5Z M28 30.5Q23 28.5 18.5 31.5L19.5 34.5Q25 35 28 33.5Z" fill="#a06a48"/><rect x="15.5" y="13" width="5" height="5" fill="#99694a"/><ellipse cx="18" cy="9.6" rx="4.9" ry="7" fill="#a9785a"/><path d="M12.9 8.5Q12.4 1.4 18 1.4Q23.8 1.4 23.2 8.5Q22 4.6 18 4.8Q14 4.6 12.9 8.5Z" fill="#dcdcdc"/><path d="M15.4 8.8h1.9M18.8 8.8h1.9" stroke="#3a2418" stroke-width="0.8"/><path d="M16 13.2Q18 14.4 20 13.2" stroke="#e8e0d8" stroke-width="0.9" fill="none"/></g></svg></div>
<span style="left:93px;top:513.0px;font-size:11px;line-height:14px;color:#e4e5ee;">Alfred</span>
<span style="left:93px;top:534.0px;font-size:11px;line-height:14px;color:#e4e5ee;">Nolan</span>
<span style="left:162px;top:513.0px;font-size:11px;line-height:14px;color:#e4e5ee;">(555)958-3819</span>
<span style="left:162px;top:534.0px;font-size:11px;line-height:14px;color:#e4e5ee;">alfred_nolan@dxvideorent.com</span>
<div style="left:29px;top:552px;width:19px;height:42px;background:#3f4150;"></div>
<div style="left:48px;top:552px;width:279px;height:42px;background:#404352;"></div>
<div style="left:48px;top:593px;width:279px;height:1px;background:#353742;"></div>
<div style="left:90px;top:572px;width:237px;height:1px;background:#353742;"></div>
<div style="left:48px;top:552px;width:1px;height:42px;background:#353742;"></div>
<div style="left:90px;top:552px;width:1px;height:42px;background:#353742;"></div>
<div style="left:159px;top:552px;width:1px;height:42px;background:#353742;"></div>
<div style="left:326px;top:552px;width:1px;height:42px;background:#353742;"></div>
<div class="ph" style="left:53px;top:553px;width:31px;height:39px;"><svg width="31" height="39" viewBox="0 0 31 39" style="left:0;top:0;"><rect width="31" height="39" fill="#fff"/><g style="filter:blur(0.45px)"><path d="M1.5 35C1 27 2.5 22 7 20L12 18L18.5 18L23 20C28 22 29.5 27 29 35Z" fill="#f0f0f3"/><path d="M3 34C3 28 4 24 6.5 22M27.5 34C27.5 28 26.5 24 24 22" stroke="#d4d4dc" stroke-width="1.2" fill="none"/><path d="M12 18L15 23.5L18.5 18Z" fill="#d8a080"/><path d="M11.5 18L15 24L18.8 18" stroke="#dcdce4" stroke-width="1" fill="none"/><path d="M2 32Q8.5 29 15 31.5Q22 29 29 32L28.5 37Q22 39.2 15 37.8Q8.5 39.2 2.5 37Z" fill="#dba684"/><path d="M6 34.5Q15 36.5 25 33" stroke="#b87c58" stroke-width="0.8" fill="none"/><rect x="12.4" y="13" width="4.8" height="6" fill="#cf9a78"/><ellipse cx="14.8" cy="9" rx="4.7" ry="6.7" fill="#dcaa8a"/><path d="M10 8Q9.6 1 14.8 1Q20.2 1 19.7 8Q18.6 4.4 14.8 4.5Q11 4.4 10 8Z" fill="#8a6a48"/><path d="M12.3 8.6h1.8M15.6 8.6h1.8" stroke="#5a4030" stroke-width="0.8"/><path d="M13.3 12.8h3" stroke="#a86a58" stroke-width="0.7"/></g></svg></div>
<span style="left:93px;top:555.0px;font-size:11px;line-height:14px;color:#e4e5ee;">Alex</span>
<span style="left:93px;top:576.0px;font-size:11px;line-height:14px;color:#e4e5ee;">Melton</span>
<span style="left:162px;top:555.0px;font-size:11px;line-height:14px;color:#e4e5ee;">(555)974-1360</span>
<span style="left:162px;top:576.0px;font-size:11px;line-height:14px;color:#e4e5ee;">alex_melton@dxvideorent.com</span>
<div style="left:29px;top:594px;width:19px;height:42px;background:#3f4150;"></div>
<div style="left:48px;top:594px;width:279px;height:42px;background:#404352;"></div>
<div style="left:48px;top:635px;width:279px;height:1px;background:#353742;"></div>
<div style="left:90px;top:614px;width:237px;height:1px;background:#353742;"></div>
<div style="left:48px;top:594px;width:1px;height:42px;background:#353742;"></div>
<div style="left:90px;top:594px;width:1px;height:42px;background:#353742;"></div>
<div style="left:159px;top:594px;width:1px;height:42px;background:#353742;"></div>
<div style="left:326px;top:594px;width:1px;height:42px;background:#353742;"></div>
<div class="ph" style="left:51px;top:595px;width:35px;height:39px;"><svg width="35" height="39" viewBox="0 0 35 39" style="left:0;top:0;"><rect width="35" height="39" fill="#f6f6f6"/><g style="filter:blur(0.45px)"><path d="M3 38C2.5 29 4 22 9 19.5L13.5 17.5L21 17.5L26 19.5C31 22 33 29 32.5 38Z" fill="#3f2a22"/><path d="M12.5 17.5Q17 26 22 17.5Z" fill="#85573e"/><path d="M6 31Q12 28.5 17.5 31.5Q23 28.5 30 31.5L29.5 36Q23 38 17.5 36.5Q12 38 6.5 36Z" fill="#37241d"/><path d="M7.5 33.5l3.5 1M27 30.5l1.5 3" stroke="#7a4e36" stroke-width="1.6"/><ellipse cx="16.8" cy="8.2" rx="8.2" ry="7.6" fill="#2a1c15"/><rect x="14.5" y="13.5" width="5" height="5" fill="#744a34"/><ellipse cx="17.2" cy="10.3" rx="4.5" ry="6" fill="#7c5039"/><path d="M12.6 9Q14 4.2 17.2 4.4Q20.6 4.2 21.8 9Q20 6.6 17.2 6.8Q14.4 6.6 12.6 9Z" fill="#2a1c15"/><path d="M14.8 10h1.9M18 10h1.9" stroke="#20140e" stroke-width="0.8"/><path d="M15.6 13.6Q17.2 14.8 18.9 13.6" stroke="#e8d8d0" stroke-width="0.8" fill="none"/></g></svg></div>
<span style="left:93px;top:597.0px;font-size:11px;line-height:14px;color:#e4e5ee;"><span style="position:static;letter-spacing:-0.2px">Clementine</span></span>
<span style="left:93px;top:618.0px;font-size:11px;line-height:14px;color:#e4e5ee;">Aguilar</span>
<span style="left:162px;top:597.0px;font-size:11px;line-height:14px;color:#e4e5ee;">(555)281-1943</span>
<span style="left:162px;top:618.0px;font-size:11px;line-height:14px;color:#e4e5ee;">clementine_aguilar@dxvideore...</span>
<div style="left:29px;top:636px;width:19px;height:42px;background:#3f4150;"></div>
<div style="left:48px;top:636px;width:279px;height:42px;background:#404352;"></div>
<div style="left:48px;top:677px;width:279px;height:1px;background:#353742;"></div>
<div style="left:90px;top:656px;width:237px;height:1px;background:#353742;"></div>
<div style="left:48px;top:636px;width:1px;height:42px;background:#353742;"></div>
<div style="left:90px;top:636px;width:1px;height:42px;background:#353742;"></div>
<div style="left:159px;top:636px;width:1px;height:42px;background:#353742;"></div>
<div style="left:326px;top:636px;width:1px;height:42px;background:#353742;"></div>
<div class="ph" style="left:52px;top:637px;width:35px;height:39px;"><svg width="35" height="39" viewBox="0 0 35 39" style="left:0;top:0;"><rect width="35" height="39" fill="#fff"/><g style="filter:blur(0.45px)"><path d="M9.5 10Q8.5 1.6 17.3 1.4Q25.5 1.6 25 10Q25.5 15.5 27 19.5L20 19L14 19L8.5 20Q10 15 9.5 10Z" fill="#dfba74"/><path d="M4.8 39C4 30 4.5 23 7.5 21L9.5 39Z M29.6 39C30.2 30 29.8 23 27 21L25 39Z" fill="#d99a6a"/><path d="M7 39L7.5 21.5Q9 19.5 12.5 19L17.5 25L22.5 19Q25.5 19.5 27 21.5L27.5 39Z" fill="#b7e6c0"/><path d="M9 26h2.5M13 30h2.5M20 28h2.5M23 33h2.5M10 35h2.5M16 36h2.5M20.5 22.5h2.5" stroke="#e8ee9a" stroke-width="1.6"/><path d="M12.5 19L17.5 25.5L22.5 19Z" fill="#dca27a"/><rect x="15" y="14.5" width="4.6" height="5" fill="#d69c74"/><ellipse cx="17.4" cy="10.2" rx="4.6" ry="6.6" fill="#e2ac8c"/><path d="M12.6 10Q12 3.4 17.4 3.4Q23 3.4 22.2 10Q21 6 17.4 6.2Q13.8 6 12.6 10Z" fill="#e3c282"/><path d="M14.8 9.6h1.8M18.1 9.6h1.8" stroke="#4a5a88" stroke-width="0.8"/><path d="M15.4 13.6Q17.4 15.2 19.4 13.6" stroke="#fff" stroke-width="0.9" fill="none"/></g></svg></div>
<span style="left:93px;top:639.0px;font-size:11px;line-height:14px;color:#e4e5ee;">Allison</span>
<span style="left:93px;top:660.0px;font-size:11px;line-height:14px;color:#e4e5ee;">Etter</span>
<span style="left:162px;top:639.0px;font-size:11px;line-height:14px;color:#e4e5ee;">(555)203-2727</span>
<span style="left:162px;top:660.0px;font-size:11px;line-height:14px;color:#e4e5ee;">allison_etter@dxvideorent.com</span>
<div style="left:29px;top:678px;width:19px;height:42px;background:#3f4150;"></div>
<div style="left:48px;top:678px;width:279px;height:42px;background:#404352;"></div>
<div style="left:48px;top:719px;width:279px;height:1px;background:#353742;"></div>
<div style="left:90px;top:698px;width:237px;height:1px;background:#353742;"></div>
<div style="left:48px;top:678px;width:1px;height:42px;background:#353742;"></div>
<div style="left:90px;top:678px;width:1px;height:42px;background:#353742;"></div>
<div style="left:159px;top:678px;width:1px;height:42px;background:#353742;"></div>
<div style="left:326px;top:678px;width:1px;height:42px;background:#353742;"></div>
<div class="ph" style="left:51px;top:679px;width:36px;height:39px;"><svg width="36" height="39" viewBox="0 0 36 39" style="left:0;top:0;"><rect width="36" height="39" fill="#fff"/><g style="filter:blur(0.45px)"><path d="M2.5 39C2.5 33 4 29 8 27.5L14 26L22 26L28.5 27.5C32.5 29 34 33 34 39Z" fill="#e2b496"/><path d="M8.5 39L9 28L14 27Q18 29.5 22.5 27L28 28L28.5 39Z" fill="#e9e9ec"/><path d="M11.2 12Q10 2.2 18 2Q26 2.2 25 12Q25.5 22 27.5 31Q24.5 33 22.5 27L13.5 27Q11.5 33 9 31.5Q11.5 22 11.2 12Z" fill="#d9c9b0"/><rect x="15.6" y="17" width="4.8" height="9.5" fill="#e0b69c"/><ellipse cx="18" cy="12" rx="4.7" ry="7" fill="#e9c4ac"/><path d="M13.2 11Q12.8 4.4 18 4.4Q23.4 4.4 22.8 11Q21 6.8 18 7Q14.6 6.8 13.2 11Z" fill="#dccdb6"/><path d="M13.6 10.8h3.6M18.8 10.8h3.6" stroke="#50485a" stroke-width="1.1"/><path d="M16.4 15.8h3.2" stroke="#d0508a" stroke-width="1.1"/></g></svg></div>
<span style="left:93px;top:681.0px;font-size:11px;line-height:14px;color:#e4e5ee;">Angela</span>
<span style="left:93px;top:702.0px;font-size:11px;line-height:14px;color:#e4e5ee;">Gross</span>
<span style="left:162px;top:681.0px;font-size:11px;line-height:14px;color:#e4e5ee;">(555)247-1252</span>
<span style="left:162px;top:702.0px;font-size:11px;line-height:14px;color:#e4e5ee;">angela_gross@dxvideorent.com</span>
<div style="left:1px;top:760px;width:1036px;height:2px;background:#3a3c4b;"></div>
<span style="left:11px;top:741.0px;font-size:11px;line-height:14px;color:#e4e5ee;letter-spacing:-0.13px;">Last Sync:&nbsp; 10/23/2011 3:44 PM</span>
<div style="left:336px;top:169px;width:695px;height:565px;background:#4e5163;border:1px solid #3e404e;"></div>
<div style="left:470px;top:150px;width:116px;height:20px;background:#474a5a;border:1px solid #3e404e;border-bottom:none;border-radius:3px 3px 0 0;"></div>
<div style="left:338px;top:150px;width:132px;height:21px;background:#4e5163;border:1px solid #3e404e;border-bottom:none;border-radius:3px 3px 0 0;"></div>
<span style="left:346px;top:153.0px;font-size:11px;line-height:14px;color:#eceef6;">Performance Report</span>
<span style="left:479px;top:153.0px;font-size:11px;line-height:14px;color:#e4e5ee;letter-spacing:-0.2px;">Additional Details</span>
<svg style="left:454px;top:154px;" width="12" height="12" viewBox="0 0 12 12"><circle cx="6" cy="6" r="5.5" fill="#d9dbe6"/><path d="M3.8 3.8L8.2 8.2M8.2 3.8L3.8 8.2" stroke="#4e5163" stroke-width="1.7"/></svg>
<svg style="left:1017px;top:156px;" width="8" height="5" viewBox="0 0 8 5"><path d="M0 0h8l-4 5z" fill="#6a6d80"/></svg>
<div style="left:348px;top:182px;width:134px;height:150px;background:#434655;border:1px solid #3a3c4a;"></div>
<div id="bigphoto" class="ph" style="left:356px;top:184px;width:116px;height:146px;"><svg width="116" height="146" viewBox="0 0 116 146" style="left:0;top:0;"><defs><filter id="curl" x="-15%" y="-15%" width="130%" height="130%"><feTurbulence type="fractalNoise" baseFrequency="0.3" numOctaves="2" seed="3" result="n"/><feDisplacementMap in="SourceGraphic" in2="n" scale="10" xChannelSelector="R" yChannelSelector="G"/></filter><filter id="curl2" x="-15%" y="-15%" width="130%" height="130%"><feTurbulence type="fractalNoise" baseFrequency="0.45" numOctaves="2" seed="11" result="n"/><feDisplacementMap in="SourceGraphic" in2="n" scale="12" xChannelSelector="G" yChannelSelector="R"/></filter><filter id="soft"><feGaussianBlur stdDeviation="0.7"/></filter><filter id="soft2"><feGaussianBlur stdDeviation="1.6"/></filter><radialGradient id="skinF" cx="0.45" cy="0.42" r="0.7"><stop offset="0" stop-color="#e8b690"/><stop offset="0.6" stop-color="#d59e78"/><stop offset="1" stop-color="#b27a56"/></radialGradient><linearGradient id="skinB" x1="0" y1="0" x2="1" y2="0"><stop offset="0" stop-color="#c98e66"/><stop offset="0.18" stop-color="#e8b792"/><stop offset="0.5" stop-color="#f0c4a2"/><stop offset="0.82" stop-color="#ebbb98"/><stop offset="1" stop-color="#c98e66"/></linearGradient><radialGradient id="hairG" cx="0.5" cy="0.4" r="0.6"><stop offset="0" stop-color="#4c382d"/><stop offset="1" stop-color="#33241d"/></radialGradient></defs><rect width="116" height="146" fill="#fff"/><g filter="url(#soft)"><path d="M5 146 C7 122 9 98 21 89 C31 83 44 83 52 79 L78 79 C86 83 98 83 106 89 C114 98 110 122 108 146 Z" fill="url(#skinB)"/><path d="M51 62 L51 86 C58 94 72 94 80 84 L80 62 Z" fill="#d29a72"/><path d="M24 146 C28 128 32 116 34.5 104 L34.5 84 L36 84 C36 110 44 132 64 132 C84 132 92 110 94 84 L95.5 84 L95.5 106 C97 118 99 130 100 146 Z" fill="#fff"/><path d="M22 146 C25 134 28 126 30.5 118 L28 146 Z M102 146 C100 134 98.5 126 97 118 L101 146 Z" fill="#fff"/></g><g filter="url(#curl)"><path d="M62 4 C84 2 100 16 103 38 C105 56 99 72 91 80 C85 80 82 62 80 50 L48 50 C47 62 47 80 43 91 C34 89 25 78 22 64 C17 44 23 21 37 11 C45 6 54 4 62 4 Z" fill="url(#hairG)"/></g><g filter="url(#curl2)" opacity="0.55"><path d="M60 8 C80 6 95 20 97 40 C98 52 95 64 90 72 C86 60 84 44 78 36 C70 28 56 28 50 36 C44 46 46 70 42 84 C34 78 28 66 27 54 C25 34 34 14 60 8 Z" fill="none" stroke="#6a5040" stroke-width="2.2" stroke-dasharray="3 5"/></g><g filter="url(#soft)"><ellipse cx="64.5" cy="51.5" rx="18.5" ry="25" fill="url(#skinF)"/></g><g filter="url(#curl)"><path d="M44 46 C43 28 54 20 66 20 C78 20 87 30 85 48 C82 36 76 26 66 25.5 C54 26 48 36 44 46 Z" fill="#3b2a22"/></g><g filter="url(#soft)"><path d="M52 42 q4 -2.6 8 -0.5 M69 40.5 q4 -2.6 8 -1" stroke="#5a3a28" stroke-width="1.1" fill="none"/><ellipse cx="56" cy="46" rx="2.6" ry="1.2" fill="#5a4a3a"/><ellipse cx="73" cy="44.5" rx="2.6" ry="1.2" fill="#5a4a3a"/><path d="M63 56 q3 2.5 6 0" stroke="#b07454" stroke-width="0.9" fill="none"/><path d="M58 63.5 Q67 66.5 77 60.5 Q72 71 64.5 70.5 Q59.5 69.5 58 63.5 Z" fill="#fff" stroke="#b8645c" stroke-width="1.1"/></g></svg></div>
<span style="left:496px;top:185.0px;font-size:11px;line-height:14px;color:#e4e5ee;letter-spacing:-0.25px;">First Name:</span>
<div style="left:555px;top:182px;width:187px;height:19px;background:#424554;border:1px solid #383a47;"></div>
<span style="left:558px;top:185.0px;font-size:11px;line-height:14px;color:#e4e5ee;letter-spacing:0px;">Hanna</span>
<span style="left:754px;top:185.0px;font-size:11px;line-height:14px;color:#e4e5ee;letter-spacing:-0.25px;">Last Name:</span>
<div style="left:814px;top:182px;width:204px;height:19px;background:#424554;border:1px solid #383a47;"></div>
<span style="left:817px;top:185.0px;font-size:11px;line-height:14px;color:#e4e5ee;letter-spacing:0px;">Angelia</span>
<span style="left:496px;top:209.0px;font-size:11px;line-height:14px;color:#e4e5ee;letter-spacing:-0.25px;">Phone:</span>
<div style="left:555px;top:206px;width:187px;height:19px;background:#424554;border:1px solid #383a47;"></div>
<span style="left:558px;top:209.0px;font-size:11px;line-height:14px;color:#e4e5ee;letter-spacing:0px;">(555)888-8255</span>
<span style="left:754px;top:209.0px;font-size:11px;line-height:14px;color:#e4e5ee;letter-spacing:-0.25px;">Birth Date:</span>
<div style="left:814px;top:206px;width:204px;height:19px;background:#424554;border:1px solid #383a47;"></div>
<span style="left:817px;top:209.0px;font-size:11px;line-height:14px;color:#e4e5ee;letter-spacing:0px;">3/24/1975</span>
<span style="left:496px;top:233.0px;font-size:11px;line-height:14px;color:#e4e5ee;letter-spacing:-0.25px;">Email:</span>
<div style="left:555px;top:230px;width:463px;height:19px;background:#424554;border:1px solid #383a47;"></div>
<span style="left:558px;top:233.0px;font-size:11px;line-height:14px;color:#e4e5ee;letter-spacing:-0.1px;">angelia_hanna@dxvideorent.com</span>
<div style="left:729px;top:191px;width:2px;height:2px;background:#eceef6;"></div>
<div style="left:732px;top:191px;width:2px;height:2px;background:#eceef6;"></div>
<div style="left:735px;top:191px;width:2px;height:2px;background:#eceef6;"></div>
<div style="left:1005px;top:191px;width:2px;height:2px;background:#eceef6;"></div>
<div style="left:1008px;top:191px;width:2px;height:2px;background:#eceef6;"></div>
<div style="left:1011px;top:191px;width:2px;height:2px;background:#eceef6;"></div>
<svg style="left:1006px;top:214px;" width="6" height="4" viewBox="0 0 6 4"><path d="M0 0h6l-3 4z" fill="#eceef6"/></svg>
<span style="left:496px;top:286.0px;font-size:11px;line-height:14px;color:#e4e5ee;letter-spacing:-0.25px;">Address:</span>
<div style="left:555px;top:254px;width:463px;height:78px;background:#424554;border:1px solid #383a47;"></div>
<span style="left:560px;top:256.0px;font-size:11px;line-height:14px;color:#e4e5ee;letter-spacing:-0.13px;">4147 Fld Ave,&nbsp; Hasbrouck Heights, NJ 07605</span>
<div style="left:1000px;top:255px;width:17px;height:76px;background:#3c3e4d;"></div>
<svg style="left:1005px;top:262px;" width="7" height="5" viewBox="0 0 7 5"><path d="M0 5h7l-3.5 -5z" fill="#5d6073"/></svg>
<svg style="left:1005px;top:319px;" width="7" height="5" viewBox="0 0 7 5"><path d="M0 0h7l-3.5 5z" fill="#5d6073"/></svg>
<div style="left:348px;top:346px;width:407px;height:189px;background:#414353;border:1px solid #333540;"></div>
<svg style="left:348px;top:346px;" width="407" height="189" viewBox="348 346 407 189" font-family="Liberation Sans, sans-serif" font-size="11"><defs><linearGradient id="gUSA" x1="0" x2="1" y1="0" y2="0"><stop offset="0" stop-color="#b8983f"/><stop offset="0.6" stop-color="#c9ab4e"/><stop offset="1" stop-color="#d9c06a"/></linearGradient><linearGradient id="gBrazil" x1="0" x2="1" y1="0" y2="0"><stop offset="0" stop-color="#78905c"/><stop offset="0.6" stop-color="#88a06c"/><stop offset="1" stop-color="#9cb37f"/></linearGradient><linearGradient id="gCanada" x1="0" x2="1" y1="0" y2="0"><stop offset="0" stop-color="#3b8ea6"/><stop offset="0.6" stop-color="#49a0b8"/><stop offset="1" stop-color="#62b6cb"/></linearGradient><linearGradient id="gRussia" x1="0" x2="1" y1="0" y2="0"><stop offset="0" stop-color="#3c60ad"/><stop offset="0.6" stop-color="#4b72c4"/><stop offset="1" stop-color="#5f86d4"/></linearGradient><linearGradient id="gJapan" x1="0" x2="1" y1="0" y2="0"><stop offset="0" stop-color="#5842a3"/><stop offset="0.6" stop-color="#6650b8"/><stop offset="1" stop-color="#7a64c9"/></linearGradient><linearGradient id="gChina" x1="0" x2="1" y1="0" y2="0"><stop offset="0" stop-color="#7f5194"/><stop offset="0.6" stop-color="#9262a8"/><stop offset="1" stop-color="#a678ba"/></linearGradient></defs><line x1="386" x2="665" y1="471.8" y2="471.8" stroke="#393b49" stroke-width="1"/><line x1="386" x2="665" y1="438.0" y2="438.0" stroke="#393b49" stroke-width="1"/><line x1="386" x2="665" y1="404.2" y2="404.2" stroke="#393b49" stroke-width="1"/><line x1="386" x2="665" y1="370.5" y2="370.5" stroke="#393b49" stroke-width="1"/><line x1="386" x2="665" y1="357.5" y2="357.5" stroke="#393b49"/><line x1="665.5" x2="665.5" y1="357" y2="505" stroke="#393b49"/><line x1="385.5" x2="385.5" y1="357" y2="506" stroke="#2c2d38"/><line x1="382" x2="666" y1="505.5" y2="505.5" stroke="#2c2d38"/><line x1="381" x2="385" y1="505.5" y2="505.5" stroke="#2c2d38"/><line x1="383" x2="385" y1="493.5" y2="493.5" stroke="#2c2d38"/><line x1="383" x2="385" y1="482.5" y2="482.5" stroke="#2c2d38"/><line x1="381" x2="385" y1="471.5" y2="471.5" stroke="#2c2d38"/><line x1="383" x2="385" y1="460.5" y2="460.5" stroke="#2c2d38"/><line x1="383" x2="385" y1="448.5" y2="448.5" stroke="#2c2d38"/><line x1="381" x2="385" y1="437.5" y2="437.5" stroke="#2c2d38"/><line x1="383" x2="385" y1="426.5" y2="426.5" stroke="#2c2d38"/><line x1="383" x2="385" y1="415.5" y2="415.5" stroke="#2c2d38"/><line x1="381" x2="385" y1="403.5" y2="403.5" stroke="#2c2d38"/><line x1="383" x2="385" y1="392.5" y2="392.5" stroke="#2c2d38"/><line x1="383" x2="385" y1="381.5" y2="381.5" stroke="#2c2d38"/><line x1="381" x2="385" y1="370.5" y2="370.5" stroke="#2c2d38"/><line x1="383" x2="385" y1="358.5" y2="358.5" stroke="#2c2d38"/><text x="374" y="508.8" text-anchor="end" fill="#e4e5ee">0</text><text x="374" y="475.1" text-anchor="end" fill="#e4e5ee">50</text><text x="374" y="441.3" text-anchor="end" fill="#e4e5ee">100</text><text x="374" y="407.6" text-anchor="end" fill="#e4e5ee">150</text><text x="374" y="373.8" text-anchor="end" fill="#e4e5ee">200</text><rect x="397" y="403.8" width="15" height="33.8" fill="url(#gBrazil)"/><rect x="397" y="437.5" width="15" height="67.5" fill="url(#gUSA)"/><rect x="413" y="438.9" width="15" height="45.9" fill="url(#gRussia)"/><rect x="413" y="484.8" width="15" height="20.2" fill="url(#gCanada)"/><rect x="429" y="423.3" width="15" height="68.2" fill="url(#gChina)"/><rect x="429" y="491.5" width="15" height="13.5" fill="url(#gJapan)"/><line x1="421.0" x2="421.0" y1="506" y2="510" stroke="#2c2d38"/><text x="420.5" y="525" text-anchor="middle" fill="#e4e5ee">1st Quarter</text><rect x="467" y="423.3" width="15" height="27.7" fill="url(#gBrazil)"/><rect x="467" y="451.0" width="15" height="54.0" fill="url(#gUSA)"/><rect x="483" y="454.4" width="15" height="37.1" fill="url(#gRussia)"/><rect x="483" y="491.5" width="15" height="13.5" fill="url(#gCanada)"/><rect x="499" y="397.0" width="15" height="81.0" fill="url(#gChina)"/><rect x="499" y="478.0" width="15" height="27.0" fill="url(#gJapan)"/><line x1="491.0" x2="491.0" y1="506" y2="510" stroke="#2c2d38"/><text x="490.5" y="525" text-anchor="middle" fill="#e4e5ee">2nd</text><rect x="537" y="427.4" width="15" height="30.4" fill="url(#gBrazil)"/><rect x="537" y="457.8" width="15" height="47.2" fill="url(#gUSA)"/><rect x="553" y="420.6" width="15" height="67.5" fill="url(#gRussia)"/><rect x="553" y="488.1" width="15" height="16.9" fill="url(#gCanada)"/><rect x="569" y="370.0" width="15" height="94.5" fill="url(#gChina)"/><rect x="569" y="464.5" width="15" height="40.5" fill="url(#gJapan)"/><line x1="561.0" x2="561.0" y1="506" y2="510" stroke="#2c2d38"/><text x="560.5" y="525" text-anchor="middle" fill="#e4e5ee">3rd</text><rect x="607" y="427.4" width="15" height="20.2" fill="url(#gBrazil)"/><rect x="607" y="447.6" width="15" height="57.4" fill="url(#gUSA)"/><rect x="623" y="417.2" width="15" height="60.8" fill="url(#gRussia)"/><rect x="623" y="478.0" width="15" height="27.0" fill="url(#gCanada)"/><rect x="639" y="397.0" width="15" height="54.0" fill="url(#gChina)"/><rect x="639" y="451.0" width="15" height="54.0" fill="url(#gJapan)"/><line x1="631.0" x2="631.0" y1="506" y2="510" stroke="#2c2d38"/><text x="630.5" y="525" text-anchor="middle" fill="#e4e5ee">4th</text><rect x="677.5" y="357.5" width="66" height="110" fill="#414353" stroke="#343641"/><rect x="680" y="362" width="17" height="14" fill="url(#gUSA)"/><text x="702" y="373" fill="#e4e5ee">USA</text><rect x="680" y="380" width="17" height="14" fill="url(#gBrazil)"/><text x="702" y="391" fill="#e4e5ee">Brazil</text><rect x="680" y="398" width="17" height="14" fill="url(#gCanada)"/><text x="702" y="409" fill="#e4e5ee">Canada</text><rect x="680" y="416" width="17" height="14" fill="url(#gRussia)"/><text x="702" y="427" fill="#e4e5ee">Russia</text><rect x="680" y="434" width="17" height="14" fill="url(#gJapan)"/><text x="702" y="445" fill="#e4e5ee">Japan</text><rect x="680" y="452" width="17" height="14" fill="url(#gChina)"/><text x="702" y="463" fill="#e4e5ee">China</text></svg>
<div style="left:769px;top:346px;width:249px;height:189px;background:#414353;border:1px solid #333540;"></div>
<svg style="left:769px;top:346px;" width="249" height="189" viewBox="769 346 249 189" font-family="Liberation Sans, sans-serif" font-size="11"><defs><clipPath id="cpOuter"><ellipse cx="893.3" cy="438.1" rx="84.7" ry="55.5" transform="rotate(-18.5 893.3 438.1)"/></clipPath><clipPath id="cpInner"><ellipse cx="893.1" cy="433.8" rx="51.5" ry="34.0" transform="rotate(-18.5 893.1 433.8)"/></clipPath><mask id="mRing"><rect x="769" y="346" width="249" height="189" fill="#000"/><ellipse cx="893.3" cy="438.1" rx="84.7" ry="55.5" transform="rotate(-18.5 893.3 438.1)" fill="#fff"/><ellipse cx="893.1" cy="433.8" rx="51.5" ry="34.0" transform="rotate(-18.5 893.1 433.8)" fill="#000"/></mask><linearGradient id="pgY" x1="0" y1="0" x2="1" y2="1"><stop offset="0" stop-color="#dcc573"/><stop offset="1" stop-color="#cdb25a"/></linearGradient><linearGradient id="pgB" x1="1" y1="0" x2="0" y2="1"><stop offset="0" stop-color="#6f8ad2"/><stop offset="1" stop-color="#93b3ff"/></linearGradient><linearGradient id="pgC" x1="0" y1="0" x2="1" y2="1"><stop offset="0" stop-color="#86d8f2"/><stop offset="1" stop-color="#9cebff"/></linearGradient><linearGradient id="pgG" x1="1" y1="0" x2="0" y2="1"><stop offset="0" stop-color="#a2b588"/><stop offset="1" stop-color="#c9dfaa"/></linearGradient><linearGradient id="psB" x1="0" y1="0" x2="1" y2="0"><stop offset="0" stop-color="#4a5c9a"/><stop offset="1" stop-color="#34406c"/></linearGradient><linearGradient id="psC" x1="0" y1="0" x2="1" y2="0"><stop offset="0" stop-color="#4a8ca2"/><stop offset="1" stop-color="#5a9db2"/></linearGradient><linearGradient id="psG" x1="0" y1="0" x2="1" y2="0"><stop offset="0" stop-color="#b4c293"/><stop offset="1" stop-color="#98a678"/></linearGradient><linearGradient id="piG" x1="0" y1="0" x2="1" y2="0"><stop offset="0" stop-color="#5f6c4b"/><stop offset="0.5" stop-color="#8a9b6f"/><stop offset="1" stop-color="#b3c696"/></linearGradient><linearGradient id="piY" x1="0" y1="0" x2="1" y2="0"><stop offset="0" stop-color="#ecd785"/><stop offset="1" stop-color="#d8be66"/></linearGradient></defs><g><g transform="translate(3.52 16)" clip-path="url(#cpOuter)"><polygon points="893.3,432.5 720.4,568.6 674.4,454.4 737.7,276.9 882.3,212.8" fill="url(#psG)"/></g><g transform="translate(3.30 15)" clip-path="url(#cpOuter)"><polygon points="893.3,432.5 720.4,568.6 674.4,454.4 737.7,276.9 882.3,212.8" fill="url(#psG)"/></g><g transform="translate(3.08 14)" clip-path="url(#cpOuter)"><polygon points="893.3,432.5 720.4,568.6 674.4,454.4 737.7,276.9 882.3,212.8" fill="url(#psG)"/></g><g transform="translate(2.86 13)" clip-path="url(#cpOuter)"><polygon points="893.3,432.5 720.4,568.6 674.4,454.4 737.7,276.9 882.3,212.8" fill="url(#psG)"/></g><g transform="translate(2.64 12)" clip-path="url(#cpOuter)"><polygon points="893.3,432.5 720.4,568.6 674.4,454.4 737.7,276.9 882.3,212.8" fill="url(#psG)"/></g><g transform="translate(2.42 11)" clip-path="url(#cpOuter)"><polygon points="893.3,432.5 720.4,568.6 674.4,454.4 737.7,276.9 882.3,212.8" fill="url(#psG)"/></g><g transform="translate(2.20 10)" clip-path="url(#cpOuter)"><polygon points="893.3,432.5 720.4,568.6 674.4,454.4 737.7,276.9 882.3,212.8" fill="url(#psG)"/></g><g transform="translate(1.98 9)" clip-path="url(#cpOuter)"><polygon points="893.3,432.5 720.4,568.6 674.4,454.4 737.7,276.9 882.3,212.8" fill="url(#psG)"/></g><g transform="translate(1.76 8)" clip-path="url(#cpOuter)"><polygon points="893.3,432.5 720.4,568.6 674.4,454.4 737.7,276.9 882.3,212.8" fill="url(#psG)"/></g><g transform="translate(1.54 7)" clip-path="url(#cpOuter)"><polygon points="893.3,432.5 720.4,568.6 674.4,454.4 737.7,276.9 882.3,212.8" fill="url(#psG)"/></g><g transform="translate(1.32 6)" clip-path="url(#cpOuter)"><polygon points="893.3,432.5 720.4,568.6 674.4,454.4 737.7,276.9 882.3,212.8" fill="url(#psG)"/></g><g transform="translate(1.10 5)" clip-path="url(#cpOuter)"><polygon points="893.3,432.5 720.4,568.6 674.4,454.4 737.7,276.9 882.3,212.8" fill="url(#psG)"/></g><g transform="translate(0.88 4)" clip-path="url(#cpOuter)"><polygon points="893.3,432.5 720.4,568.6 674.4,454.4 737.7,276.9 882.3,212.8" fill="url(#psG)"/></g><g transform="translate(0.66 3)" clip-path="url(#cpOuter)"><polygon points="893.3,432.5 720.4,568.6 674.4,454.4 737.7,276.9 882.3,212.8" fill="url(#psG)"/></g><g transform="translate(0.44 2)" clip-path="url(#cpOuter)"><polygon points="893.3,432.5 720.4,568.6 674.4,454.4 737.7,276.9 882.3,212.8" fill="url(#psG)"/></g><g transform="translate(0.22 1)" clip-path="url(#cpOuter)"><polygon points="893.3,432.5 720.4,568.6 674.4,454.4 737.7,276.9 882.3,212.8" fill="url(#psG)"/></g></g><g><g transform="translate(3.52 16)" clip-path="url(#cpOuter)"><polygon points="893.3,432.5 888.9,652.5 811.6,636.8 720.4,568.6" fill="url(#psC)"/></g><g transform="translate(3.30 15)" clip-path="url(#cpOuter)"><polygon points="893.3,432.5 888.9,652.5 811.6,636.8 720.4,568.6" fill="url(#psC)"/></g><g transform="translate(3.08 14)" clip-path="url(#cpOuter)"><polygon points="893.3,432.5 888.9,652.5 811.6,636.8 720.4,568.6" fill="url(#psC)"/></g><g transform="translate(2.86 13)" clip-path="url(#cpOuter)"><polygon points="893.3,432.5 888.9,652.5 811.6,636.8 720.4,568.6" fill="url(#psC)"/></g><g transform="translate(2.64 12)" clip-path="url(#cpOuter)"><polygon points="893.3,432.5 888.9,652.5 811.6,636.8 720.4,568.6" fill="url(#psC)"/></g><g transform="translate(2.42 11)" clip-path="url(#cpOuter)"><polygon points="893.3,432.5 888.9,652.5 811.6,636.8 720.4,568.6" fill="url(#psC)"/></g><g transform="translate(2.20 10)" clip-path="url(#cpOuter)"><polygon points="893.3,432.5 888.9,652.5 811.6,636.8 720.4,568.6" fill="url(#psC)"/></g><g transform="translate(1.98 9)" clip-path="url(#cpOuter)"><polygon points="893.3,432.5 888.9,652.5 811.6,636.8 720.4,568.6" fill="url(#psC)"/></g><g transform="translate(1.76 8)" clip-path="url(#cpOuter)"><polygon points="893.3,432.5 888.9,652.5 811.6,636.8 720.4,568.6" fill="url(#psC)"/></g><g transform="translate(1.54 7)" clip-path="url(#cpOuter)"><polygon points="893.3,432.5 888.9,652.5 811.6,636.8 720.4,568.6" fill="url(#psC)"/></g><g transform="translate(1.32 6)" clip-path="url(#cpOuter)"><polygon points="893.3,432.5 888.9,652.5 811.6,636.8 720.4,568.6" fill="url(#psC)"/></g><g transform="translate(1.10 5)" clip-path="url(#cpOuter)"><polygon points="893.3,432.5 888.9,652.5 811.6,636.8 720.4,568.6" fill="url(#psC)"/></g><g transform="translate(0.88 4)" clip-path="url(#cpOuter)"><polygon points="893.3,432.5 888.9,652.5 811.6,636.8 720.4,568.6" fill="url(#psC)"/></g><g transform="translate(0.66 3)" clip-path="url(#cpOuter)"><polygon points="893.3,432.5 888.9,652.5 811.6,636.8 720.4,568.6" fill="url(#psC)"/></g><g transform="translate(0.44 2)" clip-path="url(#cpOuter)"><polygon points="893.3,432.5 888.9,652.5 811.6,636.8 720.4,568.6" fill="url(#psC)"/></g><g transform="translate(0.22 1)" clip-path="url(#cpOuter)"><polygon points="893.3,432.5 888.9,652.5 811.6,636.8 720.4,568.6" fill="url(#psC)"/></g></g><g><g transform="translate(3.52 16)" clip-path="url(#cpOuter)"><polygon points="893.3,432.5 1111.7,406.3 1048.9,588.1 888.9,652.5" fill="url(#psB)"/></g><g transform="translate(3.30 15)" clip-path="url(#cpOuter)"><polygon points="893.3,432.5 1111.7,406.3 1048.9,588.1 888.9,652.5" fill="url(#psB)"/></g><g transform="translate(3.08 14)" clip-path="url(#cpOuter)"><polygon points="893.3,432.5 1111.7,406.3 1048.9,588.1 888.9,652.5" fill="url(#psB)"/></g><g transform="translate(2.86 13)" clip-path="url(#cpOuter)"><polygon points="893.3,432.5 1111.7,406.3 1048.9,588.1 888.9,652.5" fill="url(#psB)"/></g><g transform="translate(2.64 12)" clip-path="url(#cpOuter)"><polygon points="893.3,432.5 1111.7,406.3 1048.9,588.1 888.9,652.5" fill="url(#psB)"/></g><g transform="translate(2.42 11)" clip-path="url(#cpOuter)"><polygon points="893.3,432.5 1111.7,406.3 1048.9,588.1 888.9,652.5" fill="url(#psB)"/></g><g transform="translate(2.20 10)" clip-path="url(#cpOuter)"><polygon points="893.3,432.5 1111.7,406.3 1048.9,588.1 888.9,652.5" fill="url(#psB)"/></g><g transform="translate(1.98 9)" clip-path="url(#cpOuter)"><polygon points="893.3,432.5 1111.7,406.3 1048.9,588.1 888.9,652.5" fill="url(#psB)"/></g><g transform="translate(1.76 8)" clip-path="url(#cpOuter)"><polygon points="893.3,432.5 1111.7,406.3 1048.9,588.1 888.9,652.5" fill="url(#psB)"/></g><g transform="translate(1.54 7)" clip-path="url(#cpOuter)"><polygon points="893.3,432.5 1111.7,406.3 1048.9,588.1 888.9,652.5" fill="url(#psB)"/></g><g transform="translate(1.32 6)" clip-path="url(#cpOuter)"><polygon points="893.3,432.5 1111.7,406.3 1048.9,588.1 888.9,652.5" fill="url(#psB)"/></g><g transform="translate(1.10 5)" clip-path="url(#cpOuter)"><polygon points="893.3,432.5 1111.7,406.3 1048.9,588.1 888.9,652.5" fill="url(#psB)"/></g><g transform="translate(0.88 4)" clip-path="url(#cpOuter)"><polygon points="893.3,432.5 1111.7,406.3 1048.9,588.1 888.9,652.5" fill="url(#psB)"/></g><g transform="translate(0.66 3)" clip-path="url(#cpOuter)"><polygon points="893.3,432.5 1111.7,406.3 1048.9,588.1 888.9,652.5" fill="url(#psB)"/></g><g transform="translate(0.44 2)" clip-path="url(#cpOuter)"><polygon points="893.3,432.5 1111.7,406.3 1048.9,588.1 888.9,652.5" fill="url(#psB)"/></g><g transform="translate(0.22 1)" clip-path="url(#cpOuter)"><polygon points="893.3,432.5 1111.7,406.3 1048.9,588.1 888.9,652.5" fill="url(#psB)"/></g></g><g><g transform="translate(3.52 16)" clip-path="url(#cpOuter)"><polygon points="893.3,432.5 882.3,212.8 1048.9,276.9 1111.7,406.3" fill="#3b4a7e"/></g><g transform="translate(3.30 15)" clip-path="url(#cpOuter)"><polygon points="893.3,432.5 882.3,212.8 1048.9,276.9 1111.7,406.3" fill="#3b4a7e"/></g><g transform="translate(3.08 14)" clip-path="url(#cpOuter)"><polygon points="893.3,432.5 882.3,212.8 1048.9,276.9 1111.7,406.3" fill="#3b4a7e"/></g><g transform="translate(2.86 13)" clip-path="url(#cpOuter)"><polygon points="893.3,432.5 882.3,212.8 1048.9,276.9 1111.7,406.3" fill="#3b4a7e"/></g><g transform="translate(2.64 12)" clip-path="url(#cpOuter)"><polygon points="893.3,432.5 882.3,212.8 1048.9,276.9 1111.7,406.3" fill="#3b4a7e"/></g><g transform="translate(2.42 11)" clip-path="url(#cpOuter)"><polygon points="893.3,432.5 882.3,212.8 1048.9,276.9 1111.7,406.3" fill="#3b4a7e"/></g><g transform="translate(2.20 10)" clip-path="url(#cpOuter)"><polygon points="893.3,432.5 882.3,212.8 1048.9,276.9 1111.7,406.3" fill="#3b4a7e"/></g><g transform="translate(1.98 9)" clip-path="url(#cpOuter)"><polygon points="893.3,432.5 882.3,212.8 1048.9,276.9 1111.7,406.3" fill="#3b4a7e"/></g><g transform="translate(1.76 8)" clip-path="url(#cpOuter)"><polygon points="893.3,432.5 882.3,212.8 1048.9,276.9 1111.7,406.3" fill="#3b4a7e"/></g><g transform="translate(1.54 7)" clip-path="url(#cpOuter)"><polygon points="893.3,432.5 882.3,212.8 1048.9,276.9 1111.7,406.3" fill="#3b4a7e"/></g><g transform="translate(1.32 6)" clip-path="url(#cpOuter)"><polygon points="893.3,432.5 882.3,212.8 1048.9,276.9 1111.7,406.3" fill="#3b4a7e"/></g><g transform="translate(1.10 5)" clip-path="url(#cpOuter)"><polygon points="893.3,432.5 882.3,212.8 1048.9,276.9 1111.7,406.3" fill="#3b4a7e"/></g><g transform="translate(0.88 4)" clip-path="url(#cpOuter)"><polygon points="893.3,432.5 882.3,212.8 1048.9,276.9 1111.7,406.3" fill="#3b4a7e"/></g><g transform="translate(0.66 3)" clip-path="url(#cpOuter)"><polygon points="893.3,432.5 882.3,212.8 1048.9,276.9 1111.7,406.3" fill="#3b4a7e"/></g><g transform="translate(0.44 2)" clip-path="url(#cpOuter)"><polygon points="893.3,432.5 882.3,212.8 1048.9,276.9 1111.7,406.3" fill="#3b4a7e"/></g><g transform="translate(0.22 1)" clip-path="url(#cpOuter)"><polygon points="893.3,432.5 882.3,212.8 1048.9,276.9 1111.7,406.3" fill="#3b4a7e"/></g></g><g clip-path="url(#cpInner)"><polygon points="893.3,432.5 720.4,568.6 674.4,454.4 737.7,276.9 882.3,212.8" fill="url(#piG)"/><polygon points="893.3,432.5 882.3,212.8 1048.9,276.9 1111.7,406.3" fill="url(#piY)"/><polygon points="893.3,432.5 1111.7,406.3 1048.9,588.1 888.9,652.5" fill="#7b97e0"/><polygon points="893.3,432.5 888.9,652.5 811.6,636.8 720.4,568.6" fill="#8fe0f8"/><ellipse cx="896.6" cy="451.8" rx="54.0" ry="36.5" transform="rotate(-18.5 896.6 451.8)" fill="#414353"/></g><g mask="url(#mRing)"><polygon points="893.3,432.5 882.3,212.8 1048.9,276.9 1111.7,406.3" fill="url(#pgY)"/><polygon points="893.3,432.5 1111.7,406.3 1048.9,588.1 888.9,652.5" fill="url(#pgB)"/><polygon points="893.3,432.5 888.9,652.5 811.6,636.8 720.4,568.6" fill="url(#pgC)"/><polygon points="893.3,432.5 720.4,568.6 674.4,454.4 737.7,276.9 882.3,212.8" fill="url(#pgG)"/></g><g clip-path="url(#cpOuter)"><ellipse cx="893.1" cy="433.8" rx="51.5" ry="34.0" transform="rotate(-18.5 893.1 433.8)" fill="none" stroke="rgba(255,255,240,0.55)" stroke-width="1" stroke-dasharray="95 400" stroke-dashoffset="-135"/></g><line x1="946.7" y1="387.5" x2="954.5" y2="381" stroke="#b5a255" stroke-width="1"/><rect x="954" y="366.5" width="20" height="15" fill="#fdfdf6" stroke="#b5a255" stroke-width="1"/><text x="964.0" y="378.0" text-anchor="middle" fill="#a8975a">1st</text><line x1="821.5" y1="421.5" x2="811" y2="418.5" stroke="#8f9d74" stroke-width="1"/><rect x="788.5" y="410.5" width="23" height="15" fill="#fdfdf6" stroke="#8f9d74" stroke-width="1"/><text x="800.0" y="422.0" text-anchor="middle" fill="#8a9772">2nd</text><line x1="956.5" y1="470.5" x2="964.5" y2="476" stroke="#5068b2" stroke-width="1"/><rect x="964" y="474.5" width="21" height="15" fill="#fdfdf6" stroke="#5068b2" stroke-width="1"/><text x="974.5" y="486.0" text-anchor="middle" fill="#5a6da8">4th</text><rect x="831.5" y="503.5" width="21" height="15" fill="#fdfdf6" stroke="#4a98b0" stroke-width="1"/><text x="842.0" y="515.0" text-anchor="middle" fill="#4f8fa3">3rd</text></svg>
<div style="left:348px;top:549px;width:670px;height:172px;background:#3a3c4a;border:1px solid #383a47;"></div>
<div style="left:349px;top:550px;width:200px;height:21px;background:#3b3d4c;"></div>
<div style="left:549px;top:550px;width:350px;height:21px;background:#787c90;"></div>
<div style="left:899px;top:550px;width:118px;height:21px;background:#3b3d4c;"></div>
<span style="left:355px;top:554.0px;font-size:11px;line-height:14px;color:#e4e5ee;">Wednesday, November 02, 2011 - S...</span>
<span style="left:554.0px;top:554.0px;width:340px;text-align:center;font-size:11px;line-height:14px;color:#eceef6;">Sunday, November 06, 2011 - Sunday, November 13, 2011</span>
<div style="left:899px;top:550px;width:118px;height:21px;overflow:hidden;"><span style="left:6px;top:4px;font-size:11px;line-height:14px;color:#e4e5ee;">Sunday, November 13, 2011</span></div>
<div style="left:349px;top:572px;width:668px;height:131px;overflow:hidden;">
<div style="left:0px;top:0;width:50px;height:21px;background:#3b3d4c;border-left:1px solid #343641;"></div>
<span style="left:0px;top:4px;width:50px;text-align:center;font-size:11px;line-height:14px;color:#e4e5ee;">2 Wed</span>
<div style="left:0px;top:22px;width:50px;height:109px;background:#777b8f;border-left:1px solid #6a6e82;"></div>
<div style="left:0px;top:22px;width:50px;height:15px;background:rgba(40,42,60,0.08);border-left:1px solid #6a6e82;border-bottom:1px solid #6a6e82;"></div>
<div style="left:50px;top:0;width:50px;height:21px;background:#3b3d4c;border-left:1px solid #343641;"></div>
<span style="left:50px;top:4px;width:50px;text-align:center;font-size:11px;line-height:14px;color:#e4e5ee;">3 Thu</span>
<div style="left:50px;top:22px;width:50px;height:109px;background:#777b8f;border-left:1px solid #6a6e82;"></div>
<div style="left:50px;top:22px;width:50px;height:15px;background:rgba(40,42,60,0.08);border-left:1px solid #6a6e82;border-bottom:1px solid #6a6e82;"></div>
<div style="left:100px;top:0;width:50px;height:21px;background:#3b3d4c;border-left:1px solid #343641;"></div>
<span style="left:100px;top:4px;width:50px;text-align:center;font-size:11px;line-height:14px;color:#e4e5ee;">4 Fri</span>
<div style="left:100px;top:22px;width:50px;height:109px;background:#777b8f;border-left:1px solid #6a6e82;"></div>
<div style="left:100px;top:22px;width:50px;height:15px;background:rgba(40,42,60,0.08);border-left:1px solid #6a6e82;border-bottom:1px solid #6a6e82;"></div>
<div style="left:150px;top:0;width:50px;height:21px;background:#3b3d4c;border-left:1px solid #343641;"></div>
<span style="left:150px;top:4px;width:50px;text-align:center;font-size:11px;line-height:14px;color:#e4e5ee;">5 Sat</span>
<div style="left:150px;top:22px;width:50px;height:109px;background:#74788b;border-left:1px solid #6a6e82;"></div>
<div style="left:150px;top:22px;width:50px;height:15px;background:rgba(40,42,60,0.08);border-left:1px solid #6a6e82;border-bottom:1px solid #6a6e82;"></div>
<div style="left:200px;top:0;width:50px;height:21px;background:#3b3d4c;border-left:1px solid #343641;"></div>
<span style="left:200px;top:4px;width:50px;text-align:center;font-size:11px;line-height:14px;color:#e4e5ee;">6 Sun</span>
<div style="left:200px;top:22px;width:50px;height:109px;background:#74788b;border-left:1px solid #6a6e82;"></div>
<div style="left:200px;top:22px;width:50px;height:15px;background:rgba(40,42,60,0.08);border-left:1px solid #6a6e82;border-bottom:1px solid #6a6e82;"></div>
<div style="left:250px;top:0;width:50px;height:21px;background:#3b3d4c;border-left:1px solid #343641;"></div>
<span style="left:250px;top:4px;width:50px;text-align:center;font-size:11px;line-height:14px;color:#e4e5ee;">7 Mon</span>
<div style="left:250px;top:22px;width:50px;height:109px;background:#777b8f;border-left:1px solid #6a6e82;"></div>
<div style="left:250px;top:22px;width:50px;height:15px;background:rgba(40,42,60,0.08);border-left:1px solid #6a6e82;border-bottom:1px solid #6a6e82;"></div>
<div style="left:300px;top:0;width:50px;height:21px;background:#787c90;border-left:1px solid #343641;"></div>
<span style="left:300px;top:4px;width:50px;text-align:center;font-size:11px;line-height:14px;color:#e4e5ee;">8 Tue</span>
<div style="left:300px;top:22px;width:50px;height:109px;background:#777b8f;border-left:1px solid #6a6e82;"></div>
<div style="left:300px;top:22px;width:50px;height:15px;background:rgba(40,42,60,0.08);border-left:1px solid #6a6e82;border-bottom:1px solid #6a6e82;"></div>
<div style="left:350px;top:0;width:50px;height:21px;background:#3b3d4c;border-left:1px solid #343641;"></div>
<span style="left:350px;top:4px;width:50px;text-align:center;font-size:11px;line-height:14px;color:#e4e5ee;">9 Wed</span>
<div style="left:350px;top:22px;width:50px;height:109px;background:#777b8f;border-left:1px solid #6a6e82;"></div>
<div style="left:350px;top:22px;width:50px;height:15px;background:rgba(40,42,60,0.08);border-left:1px solid #6a6e82;border-bottom:1px solid #6a6e82;"></div>
<div style="left:400px;top:0;width:50px;height:21px;background:#3b3d4c;border-left:1px solid #343641;"></div>
<span style="left:400px;top:4px;width:50px;text-align:center;font-size:11px;line-height:14px;color:#e4e5ee;">10 Thu</span>
<div style="left:400px;top:22px;width:50px;height:109px;background:#777b8f;border-left:1px solid #6a6e82;"></div>
<div style="left:400px;top:22px;width:50px;height:15px;background:rgba(40,42,60,0.08);border-left:1px solid #6a6e82;border-bottom:1px solid #6a6e82;"></div>
<div style="left:450px;top:0;width:50px;height:21px;background:#3b3d4c;border-left:1px solid #343641;"></div>
<span style="left:450px;top:4px;width:50px;text-align:center;font-size:11px;line-height:14px;color:#e4e5ee;">11 Fri</span>
<div style="left:450px;top:22px;width:50px;height:109px;background:#777b8f;border-left:1px solid #6a6e82;"></div>
<div style="left:450px;top:22px;width:50px;height:15px;background:rgba(40,42,60,0.08);border-left:1px solid #6a6e82;border-bottom:1px solid #6a6e82;"></div>
<div style="left:500px;top:0;width:50px;height:21px;background:#3b3d4c;border-left:1px solid #343641;"></div>
<span style="left:500px;top:4px;width:50px;text-align:center;font-size:11px;line-height:14px;color:#e4e5ee;">12 Sat</span>
<div style="left:500px;top:22px;width:50px;height:109px;background:#74788b;border-left:1px solid #6a6e82;"></div>
<div style="left:500px;top:22px;width:50px;height:15px;background:rgba(40,42,60,0.08);border-left:1px solid #6a6e82;border-bottom:1px solid #6a6e82;"></div>
<div style="left:550px;top:0;width:50px;height:21px;background:#3b3d4c;border-left:1px solid #343641;"></div>
<span style="left:550px;top:4px;width:50px;text-align:center;font-size:11px;line-height:14px;color:#e4e5ee;">13 Sun</span>
<div style="left:550px;top:22px;width:50px;height:109px;background:#5c5f75;border-left:1px solid #6a6e82;"></div>
<div style="left:550px;top:22px;width:50px;height:15px;background:rgba(40,42,60,0.08);border-left:1px solid #6a6e82;border-bottom:1px solid #6a6e82;"></div>
<div style="left:600px;top:0;width:50px;height:21px;background:#3b3d4c;border-left:1px solid #343641;"></div>
<span style="left:600px;top:4px;width:50px;text-align:center;font-size:11px;line-height:14px;color:#e4e5ee;">14 Mon</span>
<div style="left:600px;top:22px;width:50px;height:109px;background:#777b8f;border-left:1px solid #6a6e82;"></div>
<div style="left:600px;top:22px;width:50px;height:15px;background:rgba(40,42,60,0.08);border-left:1px solid #6a6e82;border-bottom:1px solid #6a6e82;"></div>
<div style="left:650px;top:0;width:50px;height:21px;background:#3b3d4c;border-left:1px solid #343641;"></div>
<span style="left:650px;top:4px;width:50px;text-align:center;font-size:11px;line-height:14px;color:#e4e5ee;">15 Tue</span>
<div style="left:650px;top:22px;width:50px;height:109px;background:#777b8f;border-left:1px solid #6a6e82;"></div>
<div style="left:650px;top:22px;width:50px;height:15px;background:rgba(40,42,60,0.08);border-left:1px solid #6a6e82;border-bottom:1px solid #6a6e82;"></div>
</div>
<div style="left:400px;top:611px;width:249px;height:21px;background:#c1f191;border-radius:3px;box-shadow:0 0 0 0.5px rgba(60,62,80,0.5);"></div>
<span style="left:400.0px;top:614.5px;width:249px;text-align:center;font-size:11px;line-height:14px;color:#1c1d28;letter-spacing:0px;">Project Presentation - 0%</span>
<div style="left:500px;top:635px;width:149px;height:21px;background:#a9d4ff;border-radius:3px;box-shadow:0 0 0 0.5px rgba(60,62,80,0.5);"></div>
<span style="left:500.0px;top:638.5px;width:149px;text-align:center;font-size:11px;line-height:14px;color:#1c1d28;letter-spacing:-0.2px;">Discussion Group - 0%</span>
<div style="left:700px;top:611px;width:199px;height:21px;background:#dfe0ee;border-radius:3px;box-shadow:0 0 0 0.5px rgba(60,62,80,0.5);"></div>
<span style="left:700.0px;top:614.5px;width:199px;text-align:center;font-size:11px;line-height:14px;color:#1c1d28;letter-spacing:0px;">Video Script Preparation - 0%</span>
<div style="left:750px;top:635px;width:149px;height:21px;background:#c1f191;border-radius:3px;box-shadow:0 0 0 0.5px rgba(60,62,80,0.5);"></div>
<span style="left:750.0px;top:638.5px;width:149px;text-align:center;font-size:11px;line-height:14px;color:#1c1d28;letter-spacing:0px;">Test Runs - 0%</span>
<div style="left:800px;top:659px;width:199px;height:21px;background:#fff39b;border-radius:3px;box-shadow:0 0 0 0.5px rgba(60,62,80,0.5);"></div>
<span style="left:800.0px;top:662.5px;width:199px;text-align:center;font-size:11px;line-height:14px;color:#1c1d28;letter-spacing:0px;">Post Production - 0%</span>
<div style="left:349px;top:703px;width:668px;height:17px;background:#3a3c4a;"></div>
<svg style="left:355px;top:707px;" width="6" height="9" viewBox="0 0 6 9"><path d="M6 0l-6 4.5l6 4.5z" fill="#d6d8e4"/></svg>
<svg style="left:1006px;top:707px;" width="6" height="9" viewBox="0 0 6 9"><path d="M0 0l6 4.5l-6 4.5z" fill="#d6d8e4"/></svg>
<div style="left:639px;top:706px;width:88px;height:11px;background:#c5c7d5;border-radius:3px;"></div>
<div style="left:680px;top:708px;width:1px;height:7px;background:#5a5d70;"></div>
<div style="left:682px;top:708px;width:1px;height:7px;background:#5a5d70;"></div>
<div style="left:684px;top:708px;width:1px;height:7px;background:#5a5d70;"></div>
<svg style="left:1019px;top:745px;" width="14" height="14" viewBox="0 0 14 14"><path d="M1 13L13 1M5 13L13 5M9 13L13 9" stroke="#b5b7c6" stroke-width="1"/></svg>
</div></body></html>
